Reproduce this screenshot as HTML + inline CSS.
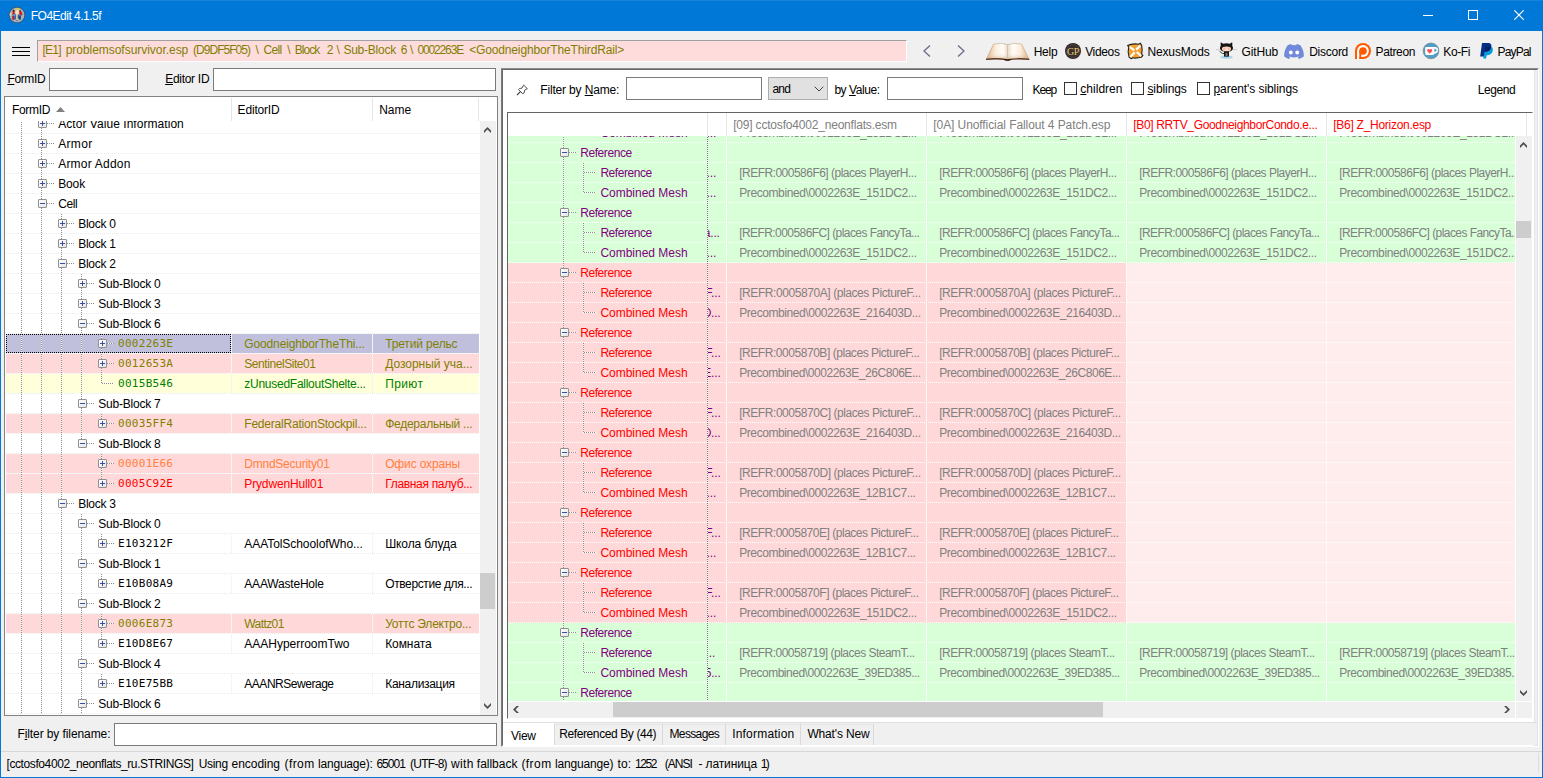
<!DOCTYPE html>
<html lang="en"><head><meta charset="utf-8"><title>FO4Edit 4.1.5f</title>
<style>
html,body{margin:0;padding:0}
body{width:1543px;height:778px;overflow:hidden;position:relative;background:#f0f0f0;font-family:"Liberation Sans",sans-serif;font-size:12px;color:#000}
div,span,svg{position:absolute;box-sizing:border-box}
.t{white-space:pre;line-height:14px;height:14px}
.m{font-family:"DejaVu Sans Mono","Liberation Mono",monospace}
u{text-decoration:underline;text-underline-offset:1px}
.inp{background:#fff;border:1px solid #7a7a7a}
.hd{background-image:repeating-linear-gradient(90deg,var(--c) 0 1px,transparent 1px 2px);height:1px}
.vd{background-image:repeating-linear-gradient(180deg,var(--c) 0 1px,transparent 1px 2px);width:1px}
.pm{width:9px;height:9px;border:1px solid #919191;border-radius:1px;background:linear-gradient(135deg,#fff,#e4e4e4)}
.pm:before{content:"";position:absolute;left:1px;top:3px;width:5px;height:1px;background:#3a4fa0}
.pm.p:after{content:"";position:absolute;left:3px;top:1px;width:1px;height:5px;background:#3a4fa0}

.tl{--c:#8c8c8c;background-color:#fff}

</style></head>
<body>
<div style="left:0px;top:0px;width:1543px;height:31px;background:#0078d7;"></div>
<div style="left:0px;top:0px;width:1543px;height:1px;background:#1883dc;"></div>
<div style="left:0px;top:31px;width:1px;height:747px;background:#0078d7;"></div>
<div style="left:1542px;top:31px;width:1px;height:747px;background:#0078d7;"></div>
<div style="left:0px;top:777px;width:1543px;height:1px;background:#0078d7;"></div>
<svg style="left:8px;top:6px" width="18" height="18" viewBox="-1 -1 18 18"><circle cx="8" cy="8" r="7.7" fill="#9fb1bb" stroke="#2c3844" stroke-width="0.9"/><circle cx="8" cy="8" r="7.1" fill="none" stroke="#c3ccd0" stroke-width="0.5"/><ellipse cx="1.7" cy="7.3" rx="1" ry="1.8" fill="#e8cfa8"/><path d="M3.5 4.4L5.6 3.6V12.3L3.6 12.8Z" fill="#e21616"/><path d="M10.2 4.2L11.6 3.6L13.7 7.3L12.4 8.6L10.3 7.2Z" fill="#e21616"/><path d="M3.6 3.6L4.9 2.6L5.4 4L4 4.6Z" fill="#151515"/><path d="M10.6 3L11.9 3.5L11.3 4.6L10.3 4.2Z" fill="#151515"/><rect x="3.2" y="7.6" width="8.6" height="4.8" fill="#3a68b0"/><path d="M3.2 7.6H6.2V9H3.2Z" fill="#6e98d4"/><path d="M9.6 9.5L11.8 8.8V12.4H9.6Z" fill="#27406e"/><rect x="3.6" y="9.2" width="1.6" height="3.4" fill="#e21616"/><ellipse cx="8.4" cy="2.6" rx="2.5" ry="1.5" fill="#d9c75c"/><ellipse cx="8.2" cy="5.2" rx="1.9" ry="2.3" fill="#f2dfcb"/><path d="M7.2 6.8H8.6V11.8H9.8V12.8H7.2Z" fill="#f3e59a"/><rect x="7.2" y="13.3" width="1.6" height="0.7" fill="#2b50a0"/></svg>
<span class="t" style="left:30.80px;top:9px;letter-spacing:-0.508px;color:#fff;">FO4Edit 4.1.5f</span>
<div style="left:1423px;top:15px;width:10px;height:1px;background:#fff;"></div>
<div style="left:1468px;top:10px;width:10px;height:10px;border:1px solid #fff;"></div>
<svg style="left:1514px;top:10px" width="10" height="10" viewBox="0 0 10 10"><path d="M0.3 0.3L9.7 9.7M9.7 0.3L0.3 9.7" stroke="#fff" stroke-width="1.15" fill="none"/></svg>
<div style="left:12px;top:47px;width:18px;height:1px;background:#000;"></div>
<div style="left:12px;top:51px;width:18px;height:1px;background:#000;"></div>
<div style="left:12px;top:55px;width:18px;height:1px;background:#000;"></div>
<div style="left:37px;top:40px;width:870px;height:22px;background:#ffdcdc;border-top:1px solid #a0a0a0;border-left:1px solid #a0a0a0;border-bottom:1px solid #fff;border-right:1px solid #fff;"></div>
<span class="t" style="left:42.60px;top:43px;letter-spacing:-0.815px;color:#808000;">[E1]</span>
<span class="t" style="left:65.70px;top:43px;letter-spacing:-0.038px;color:#808000;">problemsofsurvivor.esp</span>
<span class="t" style="left:193.10px;top:43px;letter-spacing:-0.976px;color:#808000;">(D9DF5F05)</span>
<span class="t" style="left:255.60px;top:43px;letter-spacing:0.456px;color:#808000;">\</span>
<span class="t" style="left:263.60px;top:43px;letter-spacing:-0.724px;color:#808000;">Cell</span>
<span class="t" style="left:287.20px;top:43px;letter-spacing:0.256px;color:#808000;">\</span>
<span class="t" style="left:294.80px;top:43px;letter-spacing:-0.969px;color:#808000;">Block</span>
<span class="t" style="left:326.70px;top:43px;letter-spacing:-1.972px;color:#808000;">2</span>
<span class="t" style="left:336.40px;top:43px;letter-spacing:0.256px;color:#808000;">\</span>
<span class="t" style="left:343.40px;top:43px;letter-spacing:-0.227px;color:#808000;">Sub-Block</span>
<span class="t" style="left:400.70px;top:43px;letter-spacing:-2.072px;color:#808000;">6</span>
<span class="t" style="left:409.90px;top:43px;letter-spacing:0.756px;color:#808000;">\</span>
<span class="t" style="left:417.40px;top:43px;letter-spacing:-1.131px;color:#808000;">0002263E</span>
<span class="t" style="left:469.20px;top:43px;letter-spacing:-0.147px;color:#808000;">&lt;GoodneighborTheThirdRail&gt;</span>
<svg style="left:921px;top:44px" width="12" height="14" viewBox="0 0 12 14"><path d="M9 1.5L3 7l6 5.5" stroke="#6b6b8a" stroke-width="1.3" fill="none"/></svg>
<svg style="left:955px;top:44px" width="12" height="14" viewBox="0 0 12 14"><path d="M3 1.5L9 7l-6 5.5" stroke="#6b6b8a" stroke-width="1.3" fill="none"/></svg>
<svg style="left:985px;top:42px" width="46" height="19" viewBox="985 42 46 19"><defs><linearGradient id="bl" x1="0" y1="0" x2="1" y2="0"><stop offset="0" stop-color="#dfb387"/><stop offset="0.45" stop-color="#fbeedd"/><stop offset="0.8" stop-color="#fffdf9"/><stop offset="1" stop-color="#ecdcc6"/></linearGradient><linearGradient id="br" x1="0" y1="0" x2="1" y2="0"><stop offset="0" stop-color="#eadbc6"/><stop offset="0.25" stop-color="#fffdf9"/><stop offset="0.6" stop-color="#fbeedd"/><stop offset="1" stop-color="#dcae80"/></linearGradient><linearGradient id="bs" x1="0" y1="0" x2="0" y2="1"><stop offset="0.55" stop-color="#fff" stop-opacity="0"/><stop offset="1" stop-color="#c88f5c" stop-opacity="0.55"/></linearGradient></defs><path d="M986.3 59.2L993.6 44.2Q1000.5 42.2 1007.5 44.6V59.6Q997 57.6 986.3 59.2Z" fill="url(#bl)"/><path d="M1029 59.2L1021.6 44.2Q1014.5 42.2 1007.5 44.6V59.6Q1018 57.6 1029 59.2Z" fill="url(#br)"/><path d="M986.3 59.2L993.6 44.2Q1000.5 42.2 1007.5 44.6Q1014.5 42.2 1021.6 44.2L1029 59.2Q1018 57.6 1007.5 59.6Q997 57.6 986.3 59.2Z" fill="url(#bs)"/><path d="M993.6 44.2Q1000.5 42.2 1007.5 44.6Q1014.5 42.2 1021.6 44.2" stroke="#b9a48c" stroke-width="0.6" fill="none"/><path d="M986.3 59.2L993.6 44.2M1029 59.2L1021.6 44.2" stroke="#c9a27c" stroke-width="0.7" fill="none"/><path d="M1007.5 45V59.4" stroke="#cdb9a0" stroke-width="0.8" fill="none"/><path d="M986 59.4Q997 57.9 1007.5 59.9Q1018 57.9 1029.3 59.4" stroke="#5a3420" stroke-width="1.3" fill="none"/><path d="M1004.5 59.4Q1007.5 61 1010.5 59.4" stroke="#2e1a10" stroke-width="1.2" fill="none"/></svg>
<svg style="left:1064px;top:42px" width="18" height="18" viewBox="1064 42 18 18"><circle cx="1073" cy="51" r="8" fill="#2a2226"/><circle cx="1073" cy="51" r="6.7" fill="#3a2e2c" stroke="#5a4a40" stroke-width="0.7"/><text x="1073" y="54.6" font-family="Liberation Serif,serif" font-size="10" fill="#e2c878" text-anchor="middle" letter-spacing="-0.4">GP</text></svg>
<svg style="left:1126px;top:42px" width="18" height="18" viewBox="1126 42 18 18"><path d="M1130 44.6Q1135 43.4 1138.6 44.3L1140.4 43.2L1141.6 45.2Q1142.6 50 1141.7 54.3L1142.9 55.4L1141.3 57.3Q1136 58.6 1132.6 57.8L1131.3 58.8L1129 57Q1127.6 51 1128.7 46.8L1127.6 45.6Z" fill="#f5a02c" stroke="#242424" stroke-width="1.1" stroke-linejoin="round"/><path d="M1129.8 46.8L1134.4 50.4M1140.3 45.6L1136.2 49.6M1141 56L1136.8 52M1130.2 57L1134.8 52.4" stroke="#fff" stroke-width="2.3" stroke-linecap="butt"/></svg>
<svg style="left:1215px;top:41px" width="24" height="19" viewBox="1215 41 24 19"><ellipse cx="1226.5" cy="57.2" rx="6.1" ry="1.6" fill="#9bdaf5" stroke="#e9c9bd" stroke-width="0.4"/><path d="M1216 49.6H1220.3M1233 49.6H1237" stroke="#b5b5b5" stroke-width="0.6"/><path d="M1224.3 53.6Q1222.3 53.8 1221.2 52.6Q1220.4 51.7 1219.6 51.5" stroke="#1a1a1a" stroke-width="0.9" fill="none"/><rect x="1224" y="51" width="5" height="5.6" fill="#151515"/><rect x="1225.5" y="53" width="2" height="3" fill="#7c7c7c"/><path d="M1220.9 42.2L1223.1 43.7Q1226.5 42.9 1229.9 43.7L1232.1 42.2Q1232.7 43.8 1232.2 45.6Q1233.4 47.6 1232.6 49.6Q1231.4 51.8 1226.5 51.8Q1221.6 51.8 1220.4 49.6Q1219.6 47.6 1220.8 45.6Q1220.3 43.8 1220.9 42.2Z" fill="#141414"/><ellipse cx="1226.5" cy="48.9" rx="4.6" ry="2.4" fill="#fbd6bd"/><ellipse cx="1224.2" cy="48.6" rx="0.9" ry="1.1" fill="#e9a9b2"/><ellipse cx="1228.9" cy="48.6" rx="0.9" ry="1.1" fill="#e9a9b2"/></svg>
<svg style="left:1283px;top:43px" width="22" height="17" viewBox="1283 43 22 17"><path d="M1287.6 45.2Q1289.4 44.3 1291.3 44L1291.9 45.2Q1294 44.9 1296.1 45.2L1296.7 44Q1298.6 44.3 1300.4 45.2Q1304.3 50.8 1303.8 56.6Q1301.4 58.4 1298.9 59L1297.8 57.3Q1298.9 56.9 1299.6 56.3Q1294 58.6 1288.4 56.3Q1289.1 56.9 1290.2 57.3L1289.1 59Q1286.6 58.4 1284.2 56.6Q1283.7 50.8 1287.6 45.2Z" fill="#7289da"/><circle cx="1290.8" cy="52.5" r="1.9" fill="#fff"/><circle cx="1297.2" cy="52.5" r="1.9" fill="#fff"/></svg>
<svg style="left:1354px;top:42px" width="18" height="18" viewBox="1354 42 18 18"><circle cx="1363" cy="51" r="8" fill="#ff5900"/><rect x="1355" y="51" width="8" height="8" fill="#ff5900"/><circle cx="1363" cy="51" r="5.9" fill="#fff"/><rect x="1357.1" y="51" width="2.3" height="8.2" fill="#fff"/><path d="M1357.1 51H1363V56.9H1357.1Z" fill="#fff"/><circle cx="1363" cy="51" r="3.8" fill="#ff5900"/><rect x="1359.3" y="51" width="2" height="8" fill="#ff5900"/></svg>
<svg style="left:1422px;top:42px" width="18" height="18" viewBox="1422 42 18 18"><circle cx="1431" cy="50.9" r="7.9" fill="#529fc6" stroke="#6a7378" stroke-width="0.5"/><path d="M1425.2 47.6Q1425.2 47 1425.8 47H1435Q1438 47.1 1438 50.2Q1438 53.3 1435 53.5H1434.6Q1434.4 54.9 1433 54.9H1426.6Q1425.2 54.9 1425.2 53.5Z" fill="#fff"/><path d="M1434.4 48.8H1435.2Q1436.4 48.9 1436.4 50.2Q1436.4 51.6 1435.2 51.7H1434.4Z" fill="#529fc6"/><path d="M1429.7 53.7L1427.5 51.4Q1426.6 50.1 1427.6 49.2Q1428.8 48.4 1429.7 49.6Q1430.6 48.4 1431.8 49.2Q1432.8 50.1 1431.9 51.4Z" fill="#ff4f4f"/></svg>
<svg style="left:1479px;top:42px" width="15" height="18" viewBox="1479 42 15 18"><path d="M1492 47Q1493.6 49 1492.6 51.4Q1491 55.2 1487 55.2H1486.6L1486.1 58.4H1483.2L1484.3 51.8H1486Q1490.5 51.8 1491.4 47Z" fill="#009cde"/><path d="M1482 43H1488.5Q1492 43.3 1491.3 47Q1490.5 51.8 1486 51.8H1484.6L1483.8 56.4H1480.2Z" fill="#003087"/><path d="M1485.4 46.6H1491.3Q1490.5 51.8 1486 51.8H1484.6Z" fill="#012169"/></svg>
<span class="t" style="left:1033.70px;top:45px;letter-spacing:-0.229px;">Help</span>
<span class="t" style="left:1085.20px;top:45px;letter-spacing:-0.354px;">Videos</span>
<span class="t" style="left:1147.40px;top:45px;letter-spacing:-0.132px;">NexusMods</span>
<span class="t" style="left:1241.40px;top:45px;letter-spacing:-0.089px;">GitHub</span>
<span class="t" style="left:1309.20px;top:45px;letter-spacing:-0.262px;">Discord</span>
<span class="t" style="left:1375.50px;top:45px;letter-spacing:-0.355px;">Patreon</span>
<span class="t" style="left:1443.30px;top:45px;letter-spacing:-0.368px;">Ko-Fi</span>
<span class="t" style="left:1497.60px;top:45px;letter-spacing:-0.843px;">PayPal</span>
<span class="t" style="left:7.40px;top:72px;letter-spacing:-0.360px;"><u>F</u>ormID</span>
<div class="inp" style="left:49px;top:68px;width:89px;height:23px"></div>
<span class="t" style="left:165.20px;top:72px;letter-spacing:-0.286px;"><u>E</u>ditor ID</span>
<div class="inp" style="left:213px;top:68px;width:283px;height:23px"></div>
<div style="left:4px;top:96px;width:494px;height:620px;background:#fff;border:1px solid #828282"></div>
<div style="left:5px;top:121px;width:475px;height:594px;overflow:hidden">
<div class="hd" style="--c:#ebebeb;left:1px;top:12px;width:473px"></div>
<div class="vd tl" style="left:16px;top:-7px;height:20px"></div>
<div class="vd tl" style="left:36px;top:-7px;height:20px"></div>
<div class="hd tl" style="left:42px;top:2px;width:7px"></div>
<div class="pm p" style="left:33px;top:-2px"></div>
<span class="t" style="left:53.20px;top:-4px;letter-spacing:0.050px;color:#000;">Actor Value Information</span>
<div class="hd" style="--c:#ebebeb;left:1px;top:32px;width:473px"></div>
<div class="vd tl" style="left:16px;top:13px;height:20px"></div>
<div class="vd tl" style="left:36px;top:13px;height:20px"></div>
<div class="hd tl" style="left:42px;top:22px;width:7px"></div>
<div class="pm p" style="left:33px;top:18px"></div>
<span class="t" style="left:53.20px;top:16px;letter-spacing:0.332px;color:#000;">Armor</span>
<div class="hd" style="--c:#ebebeb;left:1px;top:52px;width:473px"></div>
<div class="vd tl" style="left:16px;top:33px;height:20px"></div>
<div class="vd tl" style="left:36px;top:33px;height:20px"></div>
<div class="hd tl" style="left:42px;top:42px;width:7px"></div>
<div class="pm p" style="left:33px;top:38px"></div>
<span class="t" style="left:53.20px;top:36px;letter-spacing:0.217px;color:#000;">Armor Addon</span>
<div class="hd" style="--c:#ebebeb;left:1px;top:72px;width:473px"></div>
<div class="vd tl" style="left:16px;top:53px;height:20px"></div>
<div class="vd tl" style="left:36px;top:53px;height:20px"></div>
<div class="hd tl" style="left:42px;top:62px;width:7px"></div>
<div class="pm p" style="left:33px;top:58px"></div>
<span class="t" style="left:53.20px;top:56px;letter-spacing:-0.130px;color:#000;">Book</span>
<div class="hd" style="--c:#ebebeb;left:1px;top:92px;width:473px"></div>
<div class="vd tl" style="left:16px;top:73px;height:20px"></div>
<div class="vd tl" style="left:36px;top:73px;height:20px"></div>
<div class="hd tl" style="left:42px;top:82px;width:7px"></div>
<div class="pm " style="left:33px;top:78px"></div>
<span class="t" style="left:53.20px;top:76px;letter-spacing:-0.357px;color:#000;">Cell</span>
<div class="hd" style="--c:#ebebeb;left:1px;top:112px;width:473px"></div>
<div class="vd tl" style="left:16px;top:93px;height:20px"></div>
<div class="vd tl" style="left:36px;top:93px;height:20px"></div>
<div class="vd tl" style="left:56px;top:93px;height:20px"></div>
<div class="hd tl" style="left:62px;top:102px;width:7px"></div>
<div class="pm p" style="left:53px;top:98px"></div>
<span class="t" style="left:73.20px;top:96px;letter-spacing:-0.260px;color:#000;">Block 0</span>
<div class="hd" style="--c:#ebebeb;left:1px;top:132px;width:473px"></div>
<div class="vd tl" style="left:16px;top:113px;height:20px"></div>
<div class="vd tl" style="left:36px;top:113px;height:20px"></div>
<div class="vd tl" style="left:56px;top:113px;height:20px"></div>
<div class="hd tl" style="left:62px;top:122px;width:7px"></div>
<div class="pm p" style="left:53px;top:118px"></div>
<span class="t" style="left:73.20px;top:116px;letter-spacing:-0.260px;color:#000;">Block 1</span>
<div class="hd" style="--c:#ebebeb;left:1px;top:152px;width:473px"></div>
<div class="vd tl" style="left:16px;top:133px;height:20px"></div>
<div class="vd tl" style="left:36px;top:133px;height:20px"></div>
<div class="vd tl" style="left:56px;top:133px;height:20px"></div>
<div class="hd tl" style="left:62px;top:142px;width:7px"></div>
<div class="pm " style="left:53px;top:138px"></div>
<span class="t" style="left:73.20px;top:136px;letter-spacing:-0.260px;color:#000;">Block 2</span>
<div class="hd" style="--c:#ebebeb;left:1px;top:172px;width:473px"></div>
<div class="vd tl" style="left:16px;top:153px;height:20px"></div>
<div class="vd tl" style="left:36px;top:153px;height:20px"></div>
<div class="vd tl" style="left:56px;top:153px;height:20px"></div>
<div class="vd tl" style="left:76px;top:153px;height:20px"></div>
<div class="hd tl" style="left:82px;top:162px;width:7px"></div>
<div class="pm p" style="left:73px;top:158px"></div>
<span class="t" style="left:93.20px;top:156px;letter-spacing:-0.210px;color:#000;">Sub-Block 0</span>
<div class="hd" style="--c:#ebebeb;left:1px;top:192px;width:473px"></div>
<div class="vd tl" style="left:16px;top:173px;height:20px"></div>
<div class="vd tl" style="left:36px;top:173px;height:20px"></div>
<div class="vd tl" style="left:56px;top:173px;height:20px"></div>
<div class="vd tl" style="left:76px;top:173px;height:20px"></div>
<div class="hd tl" style="left:82px;top:182px;width:7px"></div>
<div class="pm p" style="left:73px;top:178px"></div>
<span class="t" style="left:93.20px;top:176px;letter-spacing:-0.210px;color:#000;">Sub-Block 3</span>
<div class="hd" style="--c:#ebebeb;left:1px;top:212px;width:473px"></div>
<div class="vd tl" style="left:16px;top:193px;height:20px"></div>
<div class="vd tl" style="left:36px;top:193px;height:20px"></div>
<div class="vd tl" style="left:56px;top:193px;height:20px"></div>
<div class="vd tl" style="left:76px;top:193px;height:20px"></div>
<div class="hd tl" style="left:82px;top:202px;width:7px"></div>
<div class="pm " style="left:73px;top:198px"></div>
<span class="t" style="left:93.20px;top:196px;letter-spacing:-0.210px;color:#000;">Sub-Block 6</span>
<div style="left:1px;top:213px;width:225px;height:19px;background:#c0c0dc;"></div>
<div style="left:227px;top:213px;width:140px;height:19px;background:#c0c0dc;"></div>
<div style="left:368px;top:213px;width:106px;height:19px;background:#c0c0dc;"></div>
<div class="hd" style="--c:#ebebeb;left:1px;top:232px;width:473px"></div>
<div class="vd" style="--c:#ebebeb;left:226px;top:213px;height:20px"></div>
<div class="vd" style="--c:#ebebeb;left:367px;top:213px;height:20px"></div>
<div class="vd tl" style="left:16px;top:213px;height:20px"></div>
<div class="vd tl" style="left:36px;top:213px;height:20px"></div>
<div class="vd tl" style="left:56px;top:213px;height:20px"></div>
<div class="vd tl" style="left:76px;top:213px;height:20px"></div>
<div class="vd tl" style="left:96px;top:213px;height:20px"></div>
<div class="hd tl" style="left:102px;top:222px;width:7px"></div>
<div class="pm p" style="left:93px;top:218px"></div>
<span class="t m" style="left:113.00px;top:216px;letter-spacing:0.288px;color:#808000;font-size:11px;">0002263E</span>
<span class="t" style="left:239.30px;top:216px;letter-spacing:-0.140px;color:#808000;">GoodneighborTheThi...</span>
<span class="t" style="left:380.20px;top:216px;letter-spacing:-0.150px;color:#808000;">Третий рельс</span>
<div style="left:1px;top:233px;width:225px;height:19px;background:#ffd9d9;"></div>
<div style="left:227px;top:233px;width:140px;height:19px;background:#ffd9d9;"></div>
<div style="left:368px;top:233px;width:106px;height:19px;background:#ffd9d9;"></div>
<div class="hd" style="--c:#ebebeb;left:1px;top:252px;width:473px"></div>
<div class="vd" style="--c:#ebebeb;left:226px;top:233px;height:20px"></div>
<div class="vd" style="--c:#ebebeb;left:367px;top:233px;height:20px"></div>
<div class="vd tl" style="left:16px;top:233px;height:20px"></div>
<div class="vd tl" style="left:36px;top:233px;height:20px"></div>
<div class="vd tl" style="left:56px;top:233px;height:20px"></div>
<div class="vd tl" style="left:76px;top:233px;height:20px"></div>
<div class="vd tl" style="left:96px;top:233px;height:20px"></div>
<div class="hd tl" style="left:102px;top:242px;width:7px"></div>
<div class="pm p" style="left:93px;top:238px"></div>
<span class="t m" style="left:113.00px;top:236px;letter-spacing:0.288px;color:#808000;font-size:11px;">0012653A</span>
<span class="t" style="left:239.30px;top:236px;letter-spacing:-0.438px;color:#808000;">SentinelSite01</span>
<span class="t" style="left:380.20px;top:236px;letter-spacing:-0.024px;color:#808000;">Дозорный уча...</span>
<div style="left:1px;top:253px;width:225px;height:19px;background:#ffffd9;"></div>
<div style="left:227px;top:253px;width:140px;height:19px;background:#ffffd9;"></div>
<div style="left:368px;top:253px;width:106px;height:19px;background:#ffffd9;"></div>
<div class="hd" style="--c:#ebebeb;left:1px;top:272px;width:473px"></div>
<div class="vd" style="--c:#ebebeb;left:226px;top:253px;height:20px"></div>
<div class="vd" style="--c:#ebebeb;left:367px;top:253px;height:20px"></div>
<div class="vd tl" style="left:16px;top:253px;height:20px"></div>
<div class="vd tl" style="left:36px;top:253px;height:20px"></div>
<div class="vd tl" style="left:56px;top:253px;height:20px"></div>
<div class="vd tl" style="left:76px;top:253px;height:20px"></div>
<div class="vd tl" style="left:96px;top:253px;height:10px"></div>
<div class="hd tl" style="left:97px;top:262px;width:12px"></div>
<span class="t m" style="left:113.00px;top:256px;letter-spacing:0.288px;color:#008000;font-size:11px;">0015B546</span>
<span class="t" style="left:239.30px;top:256px;letter-spacing:-0.264px;color:#008000;">zUnusedFalloutShelte...</span>
<span class="t" style="left:380.20px;top:256px;letter-spacing:0.391px;color:#008000;">Приют</span>
<div class="hd" style="--c:#ebebeb;left:1px;top:292px;width:473px"></div>
<div class="vd tl" style="left:16px;top:273px;height:20px"></div>
<div class="vd tl" style="left:36px;top:273px;height:20px"></div>
<div class="vd tl" style="left:56px;top:273px;height:20px"></div>
<div class="vd tl" style="left:76px;top:273px;height:20px"></div>
<div class="hd tl" style="left:82px;top:282px;width:7px"></div>
<div class="pm " style="left:73px;top:278px"></div>
<span class="t" style="left:93.20px;top:276px;letter-spacing:-0.210px;color:#000;">Sub-Block 7</span>
<div style="left:1px;top:293px;width:225px;height:19px;background:#ffd9d9;"></div>
<div style="left:227px;top:293px;width:140px;height:19px;background:#ffd9d9;"></div>
<div style="left:368px;top:293px;width:106px;height:19px;background:#ffd9d9;"></div>
<div class="hd" style="--c:#ebebeb;left:1px;top:312px;width:473px"></div>
<div class="vd" style="--c:#ebebeb;left:226px;top:293px;height:20px"></div>
<div class="vd" style="--c:#ebebeb;left:367px;top:293px;height:20px"></div>
<div class="vd tl" style="left:16px;top:293px;height:20px"></div>
<div class="vd tl" style="left:36px;top:293px;height:20px"></div>
<div class="vd tl" style="left:56px;top:293px;height:20px"></div>
<div class="vd tl" style="left:76px;top:293px;height:20px"></div>
<div class="vd tl" style="left:96px;top:293px;height:10px"></div>
<div class="hd tl" style="left:102px;top:302px;width:7px"></div>
<div class="pm p" style="left:93px;top:298px"></div>
<span class="t m" style="left:113.00px;top:296px;letter-spacing:0.288px;color:#808000;font-size:11px;">00035FF4</span>
<span class="t" style="left:239.30px;top:296px;letter-spacing:-0.213px;color:#808000;">FederalRationStockpil...</span>
<span class="t" style="left:380.20px;top:296px;letter-spacing:-0.265px;color:#808000;">Федеральный ...</span>
<div class="hd" style="--c:#ebebeb;left:1px;top:332px;width:473px"></div>
<div class="vd tl" style="left:16px;top:313px;height:20px"></div>
<div class="vd tl" style="left:36px;top:313px;height:20px"></div>
<div class="vd tl" style="left:56px;top:313px;height:20px"></div>
<div class="vd tl" style="left:76px;top:313px;height:10px"></div>
<div class="hd tl" style="left:82px;top:322px;width:7px"></div>
<div class="pm " style="left:73px;top:318px"></div>
<span class="t" style="left:93.20px;top:316px;letter-spacing:-0.210px;color:#000;">Sub-Block 8</span>
<div style="left:1px;top:333px;width:225px;height:19px;background:#ffd9d9;"></div>
<div style="left:227px;top:333px;width:140px;height:19px;background:#ffd9d9;"></div>
<div style="left:368px;top:333px;width:106px;height:19px;background:#ffd9d9;"></div>
<div class="hd" style="--c:#ebebeb;left:1px;top:352px;width:473px"></div>
<div class="vd" style="--c:#ebebeb;left:226px;top:333px;height:20px"></div>
<div class="vd" style="--c:#ebebeb;left:367px;top:333px;height:20px"></div>
<div class="vd tl" style="left:16px;top:333px;height:20px"></div>
<div class="vd tl" style="left:36px;top:333px;height:20px"></div>
<div class="vd tl" style="left:56px;top:333px;height:20px"></div>
<div class="vd tl" style="left:96px;top:333px;height:20px"></div>
<div class="hd tl" style="left:102px;top:342px;width:7px"></div>
<div class="pm p" style="left:93px;top:338px"></div>
<span class="t m" style="left:113.00px;top:336px;letter-spacing:0.288px;color:#ff8040;font-size:11px;">00001E66</span>
<span class="t" style="left:239.30px;top:336px;letter-spacing:-0.246px;color:#ff8040;">DmndSecurity01</span>
<span class="t" style="left:380.20px;top:336px;letter-spacing:-0.149px;color:#ff8040;">Офис охраны</span>
<div style="left:1px;top:353px;width:225px;height:19px;background:#ffd9d9;"></div>
<div style="left:227px;top:353px;width:140px;height:19px;background:#ffd9d9;"></div>
<div style="left:368px;top:353px;width:106px;height:19px;background:#ffd9d9;"></div>
<div class="hd" style="--c:#ebebeb;left:1px;top:372px;width:473px"></div>
<div class="vd" style="--c:#ebebeb;left:226px;top:353px;height:20px"></div>
<div class="vd" style="--c:#ebebeb;left:367px;top:353px;height:20px"></div>
<div class="vd tl" style="left:16px;top:353px;height:20px"></div>
<div class="vd tl" style="left:36px;top:353px;height:20px"></div>
<div class="vd tl" style="left:56px;top:353px;height:20px"></div>
<div class="vd tl" style="left:96px;top:353px;height:10px"></div>
<div class="hd tl" style="left:102px;top:362px;width:7px"></div>
<div class="pm p" style="left:93px;top:358px"></div>
<span class="t m" style="left:113.00px;top:356px;letter-spacing:0.288px;color:#ff0000;font-size:11px;">0005C92E</span>
<span class="t" style="left:239.30px;top:356px;letter-spacing:-0.142px;color:#ff0000;">PrydwenHull01</span>
<span class="t" style="left:380.20px;top:356px;letter-spacing:-0.319px;color:#ff0000;">Главная палуб...</span>
<div class="hd" style="--c:#ebebeb;left:1px;top:392px;width:473px"></div>
<div class="vd tl" style="left:16px;top:373px;height:20px"></div>
<div class="vd tl" style="left:36px;top:373px;height:20px"></div>
<div class="vd tl" style="left:56px;top:373px;height:20px"></div>
<div class="hd tl" style="left:62px;top:382px;width:7px"></div>
<div class="pm " style="left:53px;top:378px"></div>
<span class="t" style="left:73.20px;top:376px;letter-spacing:-0.260px;color:#000;">Block 3</span>
<div class="hd" style="--c:#ebebeb;left:1px;top:412px;width:473px"></div>
<div class="vd tl" style="left:16px;top:393px;height:20px"></div>
<div class="vd tl" style="left:36px;top:393px;height:20px"></div>
<div class="vd tl" style="left:56px;top:393px;height:20px"></div>
<div class="vd tl" style="left:76px;top:393px;height:20px"></div>
<div class="hd tl" style="left:82px;top:402px;width:7px"></div>
<div class="pm " style="left:73px;top:398px"></div>
<span class="t" style="left:93.20px;top:396px;letter-spacing:-0.210px;color:#000;">Sub-Block 0</span>
<div class="hd" style="--c:#ebebeb;left:1px;top:432px;width:473px"></div>
<div class="vd" style="--c:#ebebeb;left:226px;top:413px;height:20px"></div>
<div class="vd" style="--c:#ebebeb;left:367px;top:413px;height:20px"></div>
<div class="vd tl" style="left:16px;top:413px;height:20px"></div>
<div class="vd tl" style="left:36px;top:413px;height:20px"></div>
<div class="vd tl" style="left:56px;top:413px;height:20px"></div>
<div class="vd tl" style="left:76px;top:413px;height:20px"></div>
<div class="vd tl" style="left:96px;top:413px;height:10px"></div>
<div class="hd tl" style="left:102px;top:422px;width:7px"></div>
<div class="pm p" style="left:93px;top:418px"></div>
<span class="t m" style="left:113.00px;top:416px;letter-spacing:0.288px;color:#000;font-size:11px;">E103212F</span>
<span class="t" style="left:239.30px;top:416px;letter-spacing:-0.065px;color:#000;">AAATolSchoolofWho...</span>
<span class="t" style="left:380.20px;top:416px;letter-spacing:-0.104px;color:#000;">Школа блуда</span>
<div class="hd" style="--c:#ebebeb;left:1px;top:452px;width:473px"></div>
<div class="vd tl" style="left:16px;top:433px;height:20px"></div>
<div class="vd tl" style="left:36px;top:433px;height:20px"></div>
<div class="vd tl" style="left:56px;top:433px;height:20px"></div>
<div class="vd tl" style="left:76px;top:433px;height:20px"></div>
<div class="hd tl" style="left:82px;top:442px;width:7px"></div>
<div class="pm " style="left:73px;top:438px"></div>
<span class="t" style="left:93.20px;top:436px;letter-spacing:-0.210px;color:#000;">Sub-Block 1</span>
<div class="hd" style="--c:#ebebeb;left:1px;top:472px;width:473px"></div>
<div class="vd" style="--c:#ebebeb;left:226px;top:453px;height:20px"></div>
<div class="vd" style="--c:#ebebeb;left:367px;top:453px;height:20px"></div>
<div class="vd tl" style="left:16px;top:453px;height:20px"></div>
<div class="vd tl" style="left:36px;top:453px;height:20px"></div>
<div class="vd tl" style="left:56px;top:453px;height:20px"></div>
<div class="vd tl" style="left:76px;top:453px;height:20px"></div>
<div class="vd tl" style="left:96px;top:453px;height:10px"></div>
<div class="hd tl" style="left:102px;top:462px;width:7px"></div>
<div class="pm p" style="left:93px;top:458px"></div>
<span class="t m" style="left:113.00px;top:456px;letter-spacing:0.288px;color:#000;font-size:11px;">E10B08A9</span>
<span class="t" style="left:239.30px;top:456px;letter-spacing:-0.192px;color:#000;">AAAWasteHole</span>
<span class="t" style="left:380.20px;top:456px;letter-spacing:-0.382px;color:#000;">Отверстие для...</span>
<div class="hd" style="--c:#ebebeb;left:1px;top:492px;width:473px"></div>
<div class="vd tl" style="left:16px;top:473px;height:20px"></div>
<div class="vd tl" style="left:36px;top:473px;height:20px"></div>
<div class="vd tl" style="left:56px;top:473px;height:20px"></div>
<div class="vd tl" style="left:76px;top:473px;height:20px"></div>
<div class="hd tl" style="left:82px;top:482px;width:7px"></div>
<div class="pm " style="left:73px;top:478px"></div>
<span class="t" style="left:93.20px;top:476px;letter-spacing:-0.210px;color:#000;">Sub-Block 2</span>
<div style="left:1px;top:493px;width:225px;height:19px;background:#ffd9d9;"></div>
<div style="left:227px;top:493px;width:140px;height:19px;background:#ffd9d9;"></div>
<div style="left:368px;top:493px;width:106px;height:19px;background:#ffd9d9;"></div>
<div class="hd" style="--c:#ebebeb;left:1px;top:512px;width:473px"></div>
<div class="vd" style="--c:#ebebeb;left:226px;top:493px;height:20px"></div>
<div class="vd" style="--c:#ebebeb;left:367px;top:493px;height:20px"></div>
<div class="vd tl" style="left:16px;top:493px;height:20px"></div>
<div class="vd tl" style="left:36px;top:493px;height:20px"></div>
<div class="vd tl" style="left:56px;top:493px;height:20px"></div>
<div class="vd tl" style="left:76px;top:493px;height:20px"></div>
<div class="vd tl" style="left:96px;top:493px;height:20px"></div>
<div class="hd tl" style="left:102px;top:502px;width:7px"></div>
<div class="pm p" style="left:93px;top:498px"></div>
<span class="t m" style="left:113.00px;top:496px;letter-spacing:0.288px;color:#808000;font-size:11px;">0006E873</span>
<span class="t" style="left:239.30px;top:496px;letter-spacing:-0.580px;color:#808000;">Wattz01</span>
<span class="t" style="left:380.20px;top:496px;letter-spacing:-0.211px;color:#808000;">Уоттс Электро...</span>
<div class="hd" style="--c:#ebebeb;left:1px;top:532px;width:473px"></div>
<div class="vd" style="--c:#ebebeb;left:226px;top:513px;height:20px"></div>
<div class="vd" style="--c:#ebebeb;left:367px;top:513px;height:20px"></div>
<div class="vd tl" style="left:16px;top:513px;height:20px"></div>
<div class="vd tl" style="left:36px;top:513px;height:20px"></div>
<div class="vd tl" style="left:56px;top:513px;height:20px"></div>
<div class="vd tl" style="left:76px;top:513px;height:20px"></div>
<div class="vd tl" style="left:96px;top:513px;height:10px"></div>
<div class="hd tl" style="left:102px;top:522px;width:7px"></div>
<div class="pm p" style="left:93px;top:518px"></div>
<span class="t m" style="left:113.00px;top:516px;letter-spacing:0.288px;color:#000;font-size:11px;">E10D8E67</span>
<span class="t" style="left:239.30px;top:516px;letter-spacing:-0.012px;color:#000;">AAAHyperroomTwo</span>
<span class="t" style="left:380.20px;top:516px;letter-spacing:-0.083px;color:#000;">Комната</span>
<div class="hd" style="--c:#ebebeb;left:1px;top:552px;width:473px"></div>
<div class="vd tl" style="left:16px;top:533px;height:20px"></div>
<div class="vd tl" style="left:36px;top:533px;height:20px"></div>
<div class="vd tl" style="left:56px;top:533px;height:20px"></div>
<div class="vd tl" style="left:76px;top:533px;height:20px"></div>
<div class="hd tl" style="left:82px;top:542px;width:7px"></div>
<div class="pm " style="left:73px;top:538px"></div>
<span class="t" style="left:93.20px;top:536px;letter-spacing:-0.210px;color:#000;">Sub-Block 4</span>
<div class="hd" style="--c:#ebebeb;left:1px;top:572px;width:473px"></div>
<div class="vd" style="--c:#ebebeb;left:226px;top:553px;height:20px"></div>
<div class="vd" style="--c:#ebebeb;left:367px;top:553px;height:20px"></div>
<div class="vd tl" style="left:16px;top:553px;height:20px"></div>
<div class="vd tl" style="left:36px;top:553px;height:20px"></div>
<div class="vd tl" style="left:56px;top:553px;height:20px"></div>
<div class="vd tl" style="left:76px;top:553px;height:20px"></div>
<div class="vd tl" style="left:96px;top:553px;height:10px"></div>
<div class="hd tl" style="left:102px;top:562px;width:7px"></div>
<div class="pm p" style="left:93px;top:558px"></div>
<span class="t m" style="left:113.00px;top:556px;letter-spacing:0.288px;color:#000;font-size:11px;">E10E75BB</span>
<span class="t" style="left:239.30px;top:556px;letter-spacing:-0.473px;color:#000;">AAANRSewerage</span>
<span class="t" style="left:380.20px;top:556px;letter-spacing:-0.302px;color:#000;">Канализация</span>
<div class="hd" style="--c:#ebebeb;left:1px;top:592px;width:473px"></div>
<div class="vd tl" style="left:16px;top:573px;height:20px"></div>
<div class="vd tl" style="left:36px;top:573px;height:20px"></div>
<div class="vd tl" style="left:56px;top:573px;height:20px"></div>
<div class="vd tl" style="left:76px;top:573px;height:20px"></div>
<div class="hd tl" style="left:82px;top:582px;width:7px"></div>
<div class="pm " style="left:73px;top:578px"></div>
<span class="t" style="left:93.20px;top:576px;letter-spacing:-0.210px;color:#000;">Sub-Block 6</span>
<div style="left:1px;top:213px;width:225px;height:19px;border:1px dotted #000"></div>
</div>
<div style="left:5px;top:97px;width:492px;height:24px;background:#fff;"></div>
<span class="t" style="left:11.90px;top:103px;letter-spacing:-0.300px;">FormID</span>
<svg style="left:56px;top:107px" width="9" height="5" viewBox="0 0 9 5"><path d="M0 5L4.5 0L9 5Z" fill="#808080"/></svg>
<span class="t" style="left:237.60px;top:103px;letter-spacing:-0.178px;">EditorID</span>
<span class="t" style="left:379.20px;top:103px;letter-spacing:-0.005px;">Name</span>
<div style="left:231px;top:98px;width:1px;height:23px;background:#e5e5e5;"></div>
<div style="left:372px;top:98px;width:1px;height:23px;background:#e5e5e5;"></div>
<div style="left:478px;top:98px;width:1px;height:23px;background:#e5e5e5;"></div>
<div style="left:480px;top:121px;width:16px;height:594px;background:#f0f0f0;"></div>
<svg style="left:484px;top:127px" width="7" height="6" viewBox="0 0 7 6"><polygon points="0,3.5 3.5,0 7,3.5 7,6 3.5,2.5 0,6" fill="#505050"/></svg>
<svg style="left:484px;top:703px" width="7" height="6" viewBox="0 0 7 6"><polygon points="0,2.5 3.5,6 7,2.5 7,0 3.5,3.5 0,0" fill="#505050"/></svg>
<div style="left:480px;top:573px;width:15px;height:36px;background:#cdcdcd;"></div>
<span class="t" style="left:17.40px;top:727px;letter-spacing:-0.089px;">F<u>i</u>lter by filename:</span>
<div class="inp" style="left:114px;top:723px;width:383px;height:23px"></div>
<div style="left:501px;top:68px;width:1038px;height:679px;background:#f0f0f0;border-top:1px solid #8c8c8c;border-left:1px solid #7a7a7a;border-right:1px solid #fff;border-bottom:1px solid #fff"></div>
<div style="left:502px;top:69px;width:1036px;height:677px;border-top:1px solid #696969;border-left:1px solid #696969;border-right:1px solid #e3e3e3;border-bottom:1px solid #e3e3e3"></div>
<div style="left:503px;top:70px;width:1031px;height:676px;background:#fff;"></div>
<div style="left:1534px;top:70px;width:1px;height:676px;background:#e6e6e6;"></div>
<svg style="left:515px;top:83px" width="14" height="14" viewBox="515 83 14 14"><path d="M520.5 91.7L517 95" stroke="#3c3c3c" stroke-width="1.1" fill="none"/><path d="M523.6 85.1L527.4 88.7L524.7 90.1L524.1 92.9L522.7 93.7L518.5 89.6L519.5 88.5L522 88.1Z" fill="#fff" stroke="#3c3c3c" stroke-width="0.9" stroke-linejoin="round"/></svg>
<span class="t" style="left:540.30px;top:83px;letter-spacing:-0.169px;">Filter by <u>N</u>ame:</span>
<div class="inp" style="left:626px;top:77px;width:136px;height:23px"></div>
<div style="left:768px;top:77px;width:60px;height:23px;background:#e1e1e1;border:1px solid #adadad"></div>
<span class="t" style="left:772.40px;top:82px;letter-spacing:-0.708px;">and</span>
<svg style="left:814px;top:86px" width="10" height="6" viewBox="0 0 10 6"><path d="M0.7 0.7L5 5L9.3 0.7" stroke="#444" stroke-width="1" fill="none"/></svg>
<span class="t" style="left:834.40px;top:83px;letter-spacing:-0.443px;">by <u>V</u>alue:</span>
<div class="inp" style="left:887px;top:77px;width:136px;height:23px"></div>
<span class="t" style="left:1032.60px;top:83px;letter-spacing:-1.110px;">Keep</span>
<div style="left:1064px;top:82px;width:13px;height:13px;background:#fff;border:1px solid #333"></div>
<div style="left:1131px;top:82px;width:13px;height:13px;background:#fff;border:1px solid #333"></div>
<div style="left:1197px;top:82px;width:13px;height:13px;background:#fff;border:1px solid #333"></div>
<span class="t" style="left:1080.30px;top:82px;letter-spacing:0.024px;"><u>c</u>hildren</span>
<span class="t" style="left:1147.40px;top:82px;letter-spacing:-0.088px;"><u>s</u>iblings</span>
<span class="t" style="left:1213.50px;top:82px;letter-spacing:-0.073px;"><u>p</u>arent&#x27;s siblings</span>
<span class="t" style="left:1477.70px;top:83px;letter-spacing:-0.429px;">Legend</span>
<div style="left:507px;top:112px;width:1026px;height:607px;border:1px solid #646464;border-right-color:#fff;border-bottom-color:#fff"></div>
<div style="left:508px;top:136px;width:1007px;height:565px;overflow:hidden;background:#fff">
<div style="left:0px;top:-13px;width:199px;height:19px;background:#d9ffd9;"></div>
<div style="left:200px;top:-13px;width:18px;height:19px;background:#d9ffd9;"></div>
<div style="left:219px;top:-13px;width:199px;height:19px;background:#d9ffd9;"></div>
<div style="left:419px;top:-13px;width:199px;height:19px;background:#d9ffd9;"></div>
<div style="left:619px;top:-13px;width:199px;height:19px;background:#d9ffd9;"></div>
<div style="left:819px;top:-13px;width:189px;height:19px;background:#d9ffd9;"></div>
<div class="hd" style="--c:#fff;left:0;top:6px;width:1007px;background-color:#d9ffd9"></div>
<div class="vd" style="--c:#7c7c7c;left:199px;top:-13px;height:20px;background-color:#fff"></div>
<div class="vd" style="--c:#fff;left:218px;top:-13px;height:20px;background-color:#ecffec"></div>
<div class="vd" style="--c:#fff;left:418px;top:-13px;height:20px;background-color:#ecffec"></div>
<div class="vd" style="--c:#fff;left:618px;top:-13px;height:20px;background-color:#ecffec"></div>
<div class="vd" style="--c:#fff;left:818px;top:-13px;height:20px;background-color:#ecffec"></div>
<div class="vd tl" style="left:55px;top:-13px;height:20px"></div>
<div class="vd tl" style="left:75px;top:-13px;height:10px"></div>
<div class="hd tl" style="left:76px;top:-4px;width:12px"></div>
<span class="t" style="left:92.40px;top:-10px;letter-spacing:-0.015px;color:#800080;">Combined Mesh</span>
<div style="left:200px;top:-13px;width:18px;height:19px;overflow:hidden">
<span class="t" style="left:-1.40px;top:3px;letter-spacing:-0.2px;color:#800080">...</span>
</div>
<span class="t" style="left:231.20px;top:-10px;letter-spacing:-0.402px;color:#808080;">Precombined\0002263E_151DC2...</span>
<span class="t" style="left:431.20px;top:-10px;letter-spacing:-0.402px;color:#808080;">Precombined\0002263E_151DC2...</span>
<span class="t" style="left:631.20px;top:-10px;letter-spacing:-0.402px;color:#808080;">Precombined\0002263E_151DC2...</span>
<div style="left:819px;top:-13px;width:188px;height:19px;overflow:hidden">
<span class="t" style="left:12.20px;top:3px;letter-spacing:-0.402px;color:#808080;">Precombined\0002263E_151DC2...</span>
</div>
<div style="left:0px;top:7px;width:199px;height:19px;background:#d9ffd9;"></div>
<div style="left:200px;top:7px;width:18px;height:19px;background:#d9ffd9;"></div>
<div style="left:219px;top:7px;width:199px;height:19px;background:#d9ffd9;"></div>
<div style="left:419px;top:7px;width:199px;height:19px;background:#d9ffd9;"></div>
<div style="left:619px;top:7px;width:199px;height:19px;background:#d9ffd9;"></div>
<div style="left:819px;top:7px;width:189px;height:19px;background:#d9ffd9;"></div>
<div class="hd" style="--c:#fff;left:0;top:26px;width:1007px;background-color:#d9ffd9"></div>
<div class="vd" style="--c:#7c7c7c;left:199px;top:7px;height:20px;background-color:#fff"></div>
<div class="vd" style="--c:#fff;left:218px;top:7px;height:20px;background-color:#ecffec"></div>
<div class="vd" style="--c:#fff;left:418px;top:7px;height:20px;background-color:#ecffec"></div>
<div class="vd" style="--c:#fff;left:618px;top:7px;height:20px;background-color:#ecffec"></div>
<div class="vd" style="--c:#fff;left:818px;top:7px;height:20px;background-color:#ecffec"></div>
<div class="vd tl" style="left:55px;top:7px;height:20px"></div>
<div class="hd tl" style="left:61px;top:16px;width:7px"></div>
<div class="pm" style="left:52px;top:12px"></div>
<span class="t" style="left:72.20px;top:10px;letter-spacing:-0.420px;color:#800080;">Reference</span>
<div style="left:0px;top:27px;width:199px;height:19px;background:#d9ffd9;"></div>
<div style="left:200px;top:27px;width:18px;height:19px;background:#d9ffd9;"></div>
<div style="left:219px;top:27px;width:199px;height:19px;background:#d9ffd9;"></div>
<div style="left:419px;top:27px;width:199px;height:19px;background:#d9ffd9;"></div>
<div style="left:619px;top:27px;width:199px;height:19px;background:#d9ffd9;"></div>
<div style="left:819px;top:27px;width:189px;height:19px;background:#d9ffd9;"></div>
<div class="hd" style="--c:#fff;left:0;top:46px;width:1007px;background-color:#d9ffd9"></div>
<div class="vd" style="--c:#7c7c7c;left:199px;top:27px;height:20px;background-color:#fff"></div>
<div class="vd" style="--c:#fff;left:218px;top:27px;height:20px;background-color:#ecffec"></div>
<div class="vd" style="--c:#fff;left:418px;top:27px;height:20px;background-color:#ecffec"></div>
<div class="vd" style="--c:#fff;left:618px;top:27px;height:20px;background-color:#ecffec"></div>
<div class="vd" style="--c:#fff;left:818px;top:27px;height:20px;background-color:#ecffec"></div>
<div class="vd tl" style="left:55px;top:27px;height:20px"></div>
<div class="vd tl" style="left:75px;top:27px;height:20px"></div>
<div class="hd tl" style="left:76px;top:36px;width:12px"></div>
<span class="t" style="left:92.40px;top:30px;letter-spacing:-0.445px;color:#800080;">Reference</span>
<div style="left:200px;top:27px;width:18px;height:19px;overflow:hidden">
<span class="t" style="left:-1.40px;top:3px;letter-spacing:-0.2px;color:#800080">...</span>
</div>
<span class="t" style="left:231.20px;top:30px;letter-spacing:-0.514px;color:#808080;">[REFR:000586F6] (places PlayerH...</span>
<span class="t" style="left:431.20px;top:30px;letter-spacing:-0.514px;color:#808080;">[REFR:000586F6] (places PlayerH...</span>
<span class="t" style="left:631.20px;top:30px;letter-spacing:-0.514px;color:#808080;">[REFR:000586F6] (places PlayerH...</span>
<div style="left:819px;top:27px;width:188px;height:19px;overflow:hidden">
<span class="t" style="left:12.20px;top:3px;letter-spacing:-0.514px;color:#808080;">[REFR:000586F6] (places PlayerH...</span>
</div>
<div style="left:0px;top:47px;width:199px;height:19px;background:#d9ffd9;"></div>
<div style="left:200px;top:47px;width:18px;height:19px;background:#d9ffd9;"></div>
<div style="left:219px;top:47px;width:199px;height:19px;background:#d9ffd9;"></div>
<div style="left:419px;top:47px;width:199px;height:19px;background:#d9ffd9;"></div>
<div style="left:619px;top:47px;width:199px;height:19px;background:#d9ffd9;"></div>
<div style="left:819px;top:47px;width:189px;height:19px;background:#d9ffd9;"></div>
<div class="hd" style="--c:#fff;left:0;top:66px;width:1007px;background-color:#d9ffd9"></div>
<div class="vd" style="--c:#7c7c7c;left:199px;top:47px;height:20px;background-color:#fff"></div>
<div class="vd" style="--c:#fff;left:218px;top:47px;height:20px;background-color:#ecffec"></div>
<div class="vd" style="--c:#fff;left:418px;top:47px;height:20px;background-color:#ecffec"></div>
<div class="vd" style="--c:#fff;left:618px;top:47px;height:20px;background-color:#ecffec"></div>
<div class="vd" style="--c:#fff;left:818px;top:47px;height:20px;background-color:#ecffec"></div>
<div class="vd tl" style="left:55px;top:47px;height:20px"></div>
<div class="vd tl" style="left:75px;top:47px;height:10px"></div>
<div class="hd tl" style="left:76px;top:56px;width:12px"></div>
<span class="t" style="left:92.40px;top:50px;letter-spacing:-0.015px;color:#800080;">Combined Mesh</span>
<div style="left:200px;top:47px;width:18px;height:19px;overflow:hidden">
<span class="t" style="left:-1.40px;top:3px;letter-spacing:-0.2px;color:#800080">...</span>
</div>
<span class="t" style="left:231.20px;top:50px;letter-spacing:-0.402px;color:#808080;">Precombined\0002263E_151DC2...</span>
<span class="t" style="left:431.20px;top:50px;letter-spacing:-0.402px;color:#808080;">Precombined\0002263E_151DC2...</span>
<span class="t" style="left:631.20px;top:50px;letter-spacing:-0.402px;color:#808080;">Precombined\0002263E_151DC2...</span>
<div style="left:819px;top:47px;width:188px;height:19px;overflow:hidden">
<span class="t" style="left:12.20px;top:3px;letter-spacing:-0.402px;color:#808080;">Precombined\0002263E_151DC2...</span>
</div>
<div style="left:0px;top:67px;width:199px;height:19px;background:#d9ffd9;"></div>
<div style="left:200px;top:67px;width:18px;height:19px;background:#d9ffd9;"></div>
<div style="left:219px;top:67px;width:199px;height:19px;background:#d9ffd9;"></div>
<div style="left:419px;top:67px;width:199px;height:19px;background:#d9ffd9;"></div>
<div style="left:619px;top:67px;width:199px;height:19px;background:#d9ffd9;"></div>
<div style="left:819px;top:67px;width:189px;height:19px;background:#d9ffd9;"></div>
<div class="hd" style="--c:#fff;left:0;top:86px;width:1007px;background-color:#d9ffd9"></div>
<div class="vd" style="--c:#7c7c7c;left:199px;top:67px;height:20px;background-color:#fff"></div>
<div class="vd" style="--c:#fff;left:218px;top:67px;height:20px;background-color:#ecffec"></div>
<div class="vd" style="--c:#fff;left:418px;top:67px;height:20px;background-color:#ecffec"></div>
<div class="vd" style="--c:#fff;left:618px;top:67px;height:20px;background-color:#ecffec"></div>
<div class="vd" style="--c:#fff;left:818px;top:67px;height:20px;background-color:#ecffec"></div>
<div class="vd tl" style="left:55px;top:67px;height:20px"></div>
<div class="hd tl" style="left:61px;top:76px;width:7px"></div>
<div class="pm" style="left:52px;top:72px"></div>
<span class="t" style="left:72.20px;top:70px;letter-spacing:-0.420px;color:#800080;">Reference</span>
<div style="left:0px;top:87px;width:199px;height:19px;background:#d9ffd9;"></div>
<div style="left:200px;top:87px;width:18px;height:19px;background:#d9ffd9;"></div>
<div style="left:219px;top:87px;width:199px;height:19px;background:#d9ffd9;"></div>
<div style="left:419px;top:87px;width:199px;height:19px;background:#d9ffd9;"></div>
<div style="left:619px;top:87px;width:199px;height:19px;background:#d9ffd9;"></div>
<div style="left:819px;top:87px;width:189px;height:19px;background:#d9ffd9;"></div>
<div class="hd" style="--c:#fff;left:0;top:106px;width:1007px;background-color:#d9ffd9"></div>
<div class="vd" style="--c:#7c7c7c;left:199px;top:87px;height:20px;background-color:#fff"></div>
<div class="vd" style="--c:#fff;left:218px;top:87px;height:20px;background-color:#ecffec"></div>
<div class="vd" style="--c:#fff;left:418px;top:87px;height:20px;background-color:#ecffec"></div>
<div class="vd" style="--c:#fff;left:618px;top:87px;height:20px;background-color:#ecffec"></div>
<div class="vd" style="--c:#fff;left:818px;top:87px;height:20px;background-color:#ecffec"></div>
<div class="vd tl" style="left:55px;top:87px;height:20px"></div>
<div class="vd tl" style="left:75px;top:87px;height:20px"></div>
<div class="hd tl" style="left:76px;top:96px;width:12px"></div>
<span class="t" style="left:92.40px;top:90px;letter-spacing:-0.445px;color:#800080;">Reference</span>
<div style="left:200px;top:87px;width:18px;height:19px;overflow:hidden">
<span class="t" style="left:-4.17px;top:3px;letter-spacing:-0.2px;color:#800080">a...</span>
</div>
<span class="t" style="left:231.20px;top:90px;letter-spacing:-0.567px;color:#808080;">[REFR:000586FC] (places FancyTa...</span>
<span class="t" style="left:431.20px;top:90px;letter-spacing:-0.567px;color:#808080;">[REFR:000586FC] (places FancyTa...</span>
<span class="t" style="left:631.20px;top:90px;letter-spacing:-0.567px;color:#808080;">[REFR:000586FC] (places FancyTa...</span>
<div style="left:819px;top:87px;width:188px;height:19px;overflow:hidden">
<span class="t" style="left:12.20px;top:3px;letter-spacing:-0.567px;color:#808080;">[REFR:000586FC] (places FancyTa...</span>
</div>
<div style="left:0px;top:107px;width:199px;height:19px;background:#d9ffd9;"></div>
<div style="left:200px;top:107px;width:18px;height:19px;background:#d9ffd9;"></div>
<div style="left:219px;top:107px;width:199px;height:19px;background:#d9ffd9;"></div>
<div style="left:419px;top:107px;width:199px;height:19px;background:#d9ffd9;"></div>
<div style="left:619px;top:107px;width:199px;height:19px;background:#d9ffd9;"></div>
<div style="left:819px;top:107px;width:189px;height:19px;background:#d9ffd9;"></div>
<div class="hd" style="--c:#fff;left:0;top:126px;width:1007px;background-color:#d9ffd9"></div>
<div class="vd" style="--c:#7c7c7c;left:199px;top:107px;height:20px;background-color:#fff"></div>
<div class="vd" style="--c:#fff;left:218px;top:107px;height:20px;background-color:#ecffec"></div>
<div class="vd" style="--c:#fff;left:418px;top:107px;height:20px;background-color:#ecffec"></div>
<div class="vd" style="--c:#fff;left:618px;top:107px;height:20px;background-color:#ecffec"></div>
<div class="vd" style="--c:#fff;left:818px;top:107px;height:20px;background-color:#ecffec"></div>
<div class="vd tl" style="left:55px;top:107px;height:20px"></div>
<div class="vd tl" style="left:75px;top:107px;height:10px"></div>
<div class="hd tl" style="left:76px;top:116px;width:12px"></div>
<span class="t" style="left:92.40px;top:110px;letter-spacing:-0.015px;color:#800080;">Combined Mesh</span>
<div style="left:200px;top:107px;width:18px;height:19px;overflow:hidden">
<span class="t" style="left:-1.40px;top:3px;letter-spacing:-0.2px;color:#800080">...</span>
</div>
<span class="t" style="left:231.20px;top:110px;letter-spacing:-0.402px;color:#808080;">Precombined\0002263E_151DC2...</span>
<span class="t" style="left:431.20px;top:110px;letter-spacing:-0.402px;color:#808080;">Precombined\0002263E_151DC2...</span>
<span class="t" style="left:631.20px;top:110px;letter-spacing:-0.402px;color:#808080;">Precombined\0002263E_151DC2...</span>
<div style="left:819px;top:107px;width:188px;height:19px;overflow:hidden">
<span class="t" style="left:12.20px;top:3px;letter-spacing:-0.402px;color:#808080;">Precombined\0002263E_151DC2...</span>
</div>
<div style="left:0px;top:127px;width:199px;height:19px;background:#ffd9d9;"></div>
<div style="left:200px;top:127px;width:18px;height:19px;background:#ffd9d9;"></div>
<div style="left:219px;top:127px;width:199px;height:19px;background:#ffd9d9;"></div>
<div style="left:419px;top:127px;width:199px;height:19px;background:#ffd9d9;"></div>
<div style="left:619px;top:127px;width:199px;height:19px;background:#ffecec;"></div>
<div style="left:819px;top:127px;width:189px;height:19px;background:#ffecec;"></div>
<div class="hd" style="--c:#fff;left:0;top:146px;width:1007px;background-color:#ffd9d9"></div>
<div class="hd" style="--c:#fff;left:619px;top:146px;width:388px;background-color:#ffecec"></div>
<div class="vd" style="--c:#7c7c7c;left:199px;top:127px;height:20px;background-color:#fff"></div>
<div class="vd" style="--c:#fff;left:218px;top:127px;height:20px;background-color:#ffecec"></div>
<div class="vd" style="--c:#fff;left:418px;top:127px;height:20px;background-color:#ffecec"></div>
<div class="vd" style="--c:#fff;left:618px;top:127px;height:20px;background-color:#fff4f4"></div>
<div class="vd" style="--c:#fff;left:818px;top:127px;height:20px;background-color:#fff4f4"></div>
<div class="vd tl" style="left:55px;top:127px;height:20px"></div>
<div class="hd tl" style="left:61px;top:136px;width:7px"></div>
<div class="pm" style="left:52px;top:132px"></div>
<span class="t" style="left:72.20px;top:130px;letter-spacing:-0.420px;color:#ff0000;">Reference</span>
<div style="left:0px;top:147px;width:199px;height:19px;background:#ffd9d9;"></div>
<div style="left:200px;top:147px;width:18px;height:19px;background:#ffd9d9;"></div>
<div style="left:219px;top:147px;width:199px;height:19px;background:#ffd9d9;"></div>
<div style="left:419px;top:147px;width:199px;height:19px;background:#ffd9d9;"></div>
<div style="left:619px;top:147px;width:199px;height:19px;background:#ffecec;"></div>
<div style="left:819px;top:147px;width:189px;height:19px;background:#ffecec;"></div>
<div class="hd" style="--c:#fff;left:0;top:166px;width:1007px;background-color:#ffd9d9"></div>
<div class="hd" style="--c:#fff;left:619px;top:166px;width:388px;background-color:#ffecec"></div>
<div class="vd" style="--c:#7c7c7c;left:199px;top:147px;height:20px;background-color:#fff"></div>
<div class="vd" style="--c:#fff;left:218px;top:147px;height:20px;background-color:#ffecec"></div>
<div class="vd" style="--c:#fff;left:418px;top:147px;height:20px;background-color:#ffecec"></div>
<div class="vd" style="--c:#fff;left:618px;top:147px;height:20px;background-color:#fff4f4"></div>
<div class="vd" style="--c:#fff;left:818px;top:147px;height:20px;background-color:#fff4f4"></div>
<div class="vd tl" style="left:55px;top:147px;height:20px"></div>
<div class="vd tl" style="left:75px;top:147px;height:20px"></div>
<div class="hd tl" style="left:76px;top:156px;width:12px"></div>
<span class="t" style="left:92.40px;top:150px;letter-spacing:-0.445px;color:#ff0000;">Reference</span>
<div style="left:200px;top:147px;width:18px;height:19px;overflow:hidden">
<span class="t" style="left:-2.70px;top:3px;letter-spacing:-0.2px;color:#800080">F...</span>
</div>
<span class="t" style="left:231.20px;top:150px;letter-spacing:-0.420px;color:#808080;">[REFR:0005870A] (places PictureF...</span>
<span class="t" style="left:431.20px;top:150px;letter-spacing:-0.420px;color:#808080;">[REFR:0005870A] (places PictureF...</span>
<div style="left:0px;top:167px;width:199px;height:19px;background:#ffd9d9;"></div>
<div style="left:200px;top:167px;width:18px;height:19px;background:#ffd9d9;"></div>
<div style="left:219px;top:167px;width:199px;height:19px;background:#ffd9d9;"></div>
<div style="left:419px;top:167px;width:199px;height:19px;background:#ffd9d9;"></div>
<div style="left:619px;top:167px;width:199px;height:19px;background:#ffecec;"></div>
<div style="left:819px;top:167px;width:189px;height:19px;background:#ffecec;"></div>
<div class="hd" style="--c:#fff;left:0;top:186px;width:1007px;background-color:#ffd9d9"></div>
<div class="hd" style="--c:#fff;left:619px;top:186px;width:388px;background-color:#ffecec"></div>
<div class="vd" style="--c:#7c7c7c;left:199px;top:167px;height:20px;background-color:#fff"></div>
<div class="vd" style="--c:#fff;left:218px;top:167px;height:20px;background-color:#ffecec"></div>
<div class="vd" style="--c:#fff;left:418px;top:167px;height:20px;background-color:#ffecec"></div>
<div class="vd" style="--c:#fff;left:618px;top:167px;height:20px;background-color:#fff4f4"></div>
<div class="vd" style="--c:#fff;left:818px;top:167px;height:20px;background-color:#fff4f4"></div>
<div class="vd tl" style="left:55px;top:167px;height:20px"></div>
<div class="vd tl" style="left:75px;top:167px;height:10px"></div>
<div class="hd tl" style="left:76px;top:176px;width:12px"></div>
<span class="t" style="left:92.40px;top:170px;letter-spacing:-0.015px;color:#ff0000;">Combined Mesh</span>
<div style="left:200px;top:167px;width:18px;height:19px;overflow:hidden">
<span class="t" style="left:-5.37px;top:3px;letter-spacing:-0.2px;color:#800080">D...</span>
</div>
<span class="t" style="left:231.20px;top:170px;letter-spacing:-0.411px;color:#808080;">Precombined\0002263E_216403D...</span>
<span class="t" style="left:431.20px;top:170px;letter-spacing:-0.411px;color:#808080;">Precombined\0002263E_216403D...</span>
<div style="left:0px;top:187px;width:199px;height:19px;background:#ffd9d9;"></div>
<div style="left:200px;top:187px;width:18px;height:19px;background:#ffd9d9;"></div>
<div style="left:219px;top:187px;width:199px;height:19px;background:#ffd9d9;"></div>
<div style="left:419px;top:187px;width:199px;height:19px;background:#ffd9d9;"></div>
<div style="left:619px;top:187px;width:199px;height:19px;background:#ffecec;"></div>
<div style="left:819px;top:187px;width:189px;height:19px;background:#ffecec;"></div>
<div class="hd" style="--c:#fff;left:0;top:206px;width:1007px;background-color:#ffd9d9"></div>
<div class="hd" style="--c:#fff;left:619px;top:206px;width:388px;background-color:#ffecec"></div>
<div class="vd" style="--c:#7c7c7c;left:199px;top:187px;height:20px;background-color:#fff"></div>
<div class="vd" style="--c:#fff;left:218px;top:187px;height:20px;background-color:#ffecec"></div>
<div class="vd" style="--c:#fff;left:418px;top:187px;height:20px;background-color:#ffecec"></div>
<div class="vd" style="--c:#fff;left:618px;top:187px;height:20px;background-color:#fff4f4"></div>
<div class="vd" style="--c:#fff;left:818px;top:187px;height:20px;background-color:#fff4f4"></div>
<div class="vd tl" style="left:55px;top:187px;height:20px"></div>
<div class="hd tl" style="left:61px;top:196px;width:7px"></div>
<div class="pm" style="left:52px;top:192px"></div>
<span class="t" style="left:72.20px;top:190px;letter-spacing:-0.420px;color:#ff0000;">Reference</span>
<div style="left:0px;top:207px;width:199px;height:19px;background:#ffd9d9;"></div>
<div style="left:200px;top:207px;width:18px;height:19px;background:#ffd9d9;"></div>
<div style="left:219px;top:207px;width:199px;height:19px;background:#ffd9d9;"></div>
<div style="left:419px;top:207px;width:199px;height:19px;background:#ffd9d9;"></div>
<div style="left:619px;top:207px;width:199px;height:19px;background:#ffecec;"></div>
<div style="left:819px;top:207px;width:189px;height:19px;background:#ffecec;"></div>
<div class="hd" style="--c:#fff;left:0;top:226px;width:1007px;background-color:#ffd9d9"></div>
<div class="hd" style="--c:#fff;left:619px;top:226px;width:388px;background-color:#ffecec"></div>
<div class="vd" style="--c:#7c7c7c;left:199px;top:207px;height:20px;background-color:#fff"></div>
<div class="vd" style="--c:#fff;left:218px;top:207px;height:20px;background-color:#ffecec"></div>
<div class="vd" style="--c:#fff;left:418px;top:207px;height:20px;background-color:#ffecec"></div>
<div class="vd" style="--c:#fff;left:618px;top:207px;height:20px;background-color:#fff4f4"></div>
<div class="vd" style="--c:#fff;left:818px;top:207px;height:20px;background-color:#fff4f4"></div>
<div class="vd tl" style="left:55px;top:207px;height:20px"></div>
<div class="vd tl" style="left:75px;top:207px;height:20px"></div>
<div class="hd tl" style="left:76px;top:216px;width:12px"></div>
<span class="t" style="left:92.40px;top:210px;letter-spacing:-0.445px;color:#ff0000;">Reference</span>
<div style="left:200px;top:207px;width:18px;height:19px;overflow:hidden">
<span class="t" style="left:-2.70px;top:3px;letter-spacing:-0.2px;color:#800080">F...</span>
</div>
<span class="t" style="left:231.20px;top:210px;letter-spacing:-0.453px;color:#808080;">[REFR:0005870B] (places PictureF...</span>
<span class="t" style="left:431.20px;top:210px;letter-spacing:-0.453px;color:#808080;">[REFR:0005870B] (places PictureF...</span>
<div style="left:0px;top:227px;width:199px;height:19px;background:#ffd9d9;"></div>
<div style="left:200px;top:227px;width:18px;height:19px;background:#ffd9d9;"></div>
<div style="left:219px;top:227px;width:199px;height:19px;background:#ffd9d9;"></div>
<div style="left:419px;top:227px;width:199px;height:19px;background:#ffd9d9;"></div>
<div style="left:619px;top:227px;width:199px;height:19px;background:#ffecec;"></div>
<div style="left:819px;top:227px;width:189px;height:19px;background:#ffecec;"></div>
<div class="hd" style="--c:#fff;left:0;top:246px;width:1007px;background-color:#ffd9d9"></div>
<div class="hd" style="--c:#fff;left:619px;top:246px;width:388px;background-color:#ffecec"></div>
<div class="vd" style="--c:#7c7c7c;left:199px;top:227px;height:20px;background-color:#fff"></div>
<div class="vd" style="--c:#fff;left:218px;top:227px;height:20px;background-color:#ffecec"></div>
<div class="vd" style="--c:#fff;left:418px;top:227px;height:20px;background-color:#ffecec"></div>
<div class="vd" style="--c:#fff;left:618px;top:227px;height:20px;background-color:#fff4f4"></div>
<div class="vd" style="--c:#fff;left:818px;top:227px;height:20px;background-color:#fff4f4"></div>
<div class="vd tl" style="left:55px;top:227px;height:20px"></div>
<div class="vd tl" style="left:75px;top:227px;height:10px"></div>
<div class="hd tl" style="left:76px;top:236px;width:12px"></div>
<span class="t" style="left:92.40px;top:230px;letter-spacing:-0.015px;color:#ff0000;">Combined Mesh</span>
<div style="left:200px;top:227px;width:18px;height:19px;overflow:hidden">
<span class="t" style="left:-4.70px;top:3px;letter-spacing:-0.2px;color:#800080">E...</span>
</div>
<span class="t" style="left:231.20px;top:230px;letter-spacing:-0.456px;color:#808080;">Precombined\0002263E_26C806E...</span>
<span class="t" style="left:431.20px;top:230px;letter-spacing:-0.456px;color:#808080;">Precombined\0002263E_26C806E...</span>
<div style="left:0px;top:247px;width:199px;height:19px;background:#ffd9d9;"></div>
<div style="left:200px;top:247px;width:18px;height:19px;background:#ffd9d9;"></div>
<div style="left:219px;top:247px;width:199px;height:19px;background:#ffd9d9;"></div>
<div style="left:419px;top:247px;width:199px;height:19px;background:#ffd9d9;"></div>
<div style="left:619px;top:247px;width:199px;height:19px;background:#ffecec;"></div>
<div style="left:819px;top:247px;width:189px;height:19px;background:#ffecec;"></div>
<div class="hd" style="--c:#fff;left:0;top:266px;width:1007px;background-color:#ffd9d9"></div>
<div class="hd" style="--c:#fff;left:619px;top:266px;width:388px;background-color:#ffecec"></div>
<div class="vd" style="--c:#7c7c7c;left:199px;top:247px;height:20px;background-color:#fff"></div>
<div class="vd" style="--c:#fff;left:218px;top:247px;height:20px;background-color:#ffecec"></div>
<div class="vd" style="--c:#fff;left:418px;top:247px;height:20px;background-color:#ffecec"></div>
<div class="vd" style="--c:#fff;left:618px;top:247px;height:20px;background-color:#fff4f4"></div>
<div class="vd" style="--c:#fff;left:818px;top:247px;height:20px;background-color:#fff4f4"></div>
<div class="vd tl" style="left:55px;top:247px;height:20px"></div>
<div class="hd tl" style="left:61px;top:256px;width:7px"></div>
<div class="pm" style="left:52px;top:252px"></div>
<span class="t" style="left:72.20px;top:250px;letter-spacing:-0.420px;color:#ff0000;">Reference</span>
<div style="left:0px;top:267px;width:199px;height:19px;background:#ffd9d9;"></div>
<div style="left:200px;top:267px;width:18px;height:19px;background:#ffd9d9;"></div>
<div style="left:219px;top:267px;width:199px;height:19px;background:#ffd9d9;"></div>
<div style="left:419px;top:267px;width:199px;height:19px;background:#ffd9d9;"></div>
<div style="left:619px;top:267px;width:199px;height:19px;background:#ffecec;"></div>
<div style="left:819px;top:267px;width:189px;height:19px;background:#ffecec;"></div>
<div class="hd" style="--c:#fff;left:0;top:286px;width:1007px;background-color:#ffd9d9"></div>
<div class="hd" style="--c:#fff;left:619px;top:286px;width:388px;background-color:#ffecec"></div>
<div class="vd" style="--c:#7c7c7c;left:199px;top:267px;height:20px;background-color:#fff"></div>
<div class="vd" style="--c:#fff;left:218px;top:267px;height:20px;background-color:#ffecec"></div>
<div class="vd" style="--c:#fff;left:418px;top:267px;height:20px;background-color:#ffecec"></div>
<div class="vd" style="--c:#fff;left:618px;top:267px;height:20px;background-color:#fff4f4"></div>
<div class="vd" style="--c:#fff;left:818px;top:267px;height:20px;background-color:#fff4f4"></div>
<div class="vd tl" style="left:55px;top:267px;height:20px"></div>
<div class="vd tl" style="left:75px;top:267px;height:20px"></div>
<div class="hd tl" style="left:76px;top:276px;width:12px"></div>
<span class="t" style="left:92.40px;top:270px;letter-spacing:-0.445px;color:#ff0000;">Reference</span>
<div style="left:200px;top:267px;width:18px;height:19px;overflow:hidden">
<span class="t" style="left:-2.70px;top:3px;letter-spacing:-0.2px;color:#800080">F...</span>
</div>
<span class="t" style="left:231.20px;top:270px;letter-spacing:-0.440px;color:#808080;">[REFR:0005870C] (places PictureF...</span>
<span class="t" style="left:431.20px;top:270px;letter-spacing:-0.440px;color:#808080;">[REFR:0005870C] (places PictureF...</span>
<div style="left:0px;top:287px;width:199px;height:19px;background:#ffd9d9;"></div>
<div style="left:200px;top:287px;width:18px;height:19px;background:#ffd9d9;"></div>
<div style="left:219px;top:287px;width:199px;height:19px;background:#ffd9d9;"></div>
<div style="left:419px;top:287px;width:199px;height:19px;background:#ffd9d9;"></div>
<div style="left:619px;top:287px;width:199px;height:19px;background:#ffecec;"></div>
<div style="left:819px;top:287px;width:189px;height:19px;background:#ffecec;"></div>
<div class="hd" style="--c:#fff;left:0;top:306px;width:1007px;background-color:#ffd9d9"></div>
<div class="hd" style="--c:#fff;left:619px;top:306px;width:388px;background-color:#ffecec"></div>
<div class="vd" style="--c:#7c7c7c;left:199px;top:287px;height:20px;background-color:#fff"></div>
<div class="vd" style="--c:#fff;left:218px;top:287px;height:20px;background-color:#ffecec"></div>
<div class="vd" style="--c:#fff;left:418px;top:287px;height:20px;background-color:#ffecec"></div>
<div class="vd" style="--c:#fff;left:618px;top:287px;height:20px;background-color:#fff4f4"></div>
<div class="vd" style="--c:#fff;left:818px;top:287px;height:20px;background-color:#fff4f4"></div>
<div class="vd tl" style="left:55px;top:287px;height:20px"></div>
<div class="vd tl" style="left:75px;top:287px;height:10px"></div>
<div class="hd tl" style="left:76px;top:296px;width:12px"></div>
<span class="t" style="left:92.40px;top:290px;letter-spacing:-0.015px;color:#ff0000;">Combined Mesh</span>
<div style="left:200px;top:287px;width:18px;height:19px;overflow:hidden">
<span class="t" style="left:-5.37px;top:3px;letter-spacing:-0.2px;color:#800080">D...</span>
</div>
<span class="t" style="left:231.20px;top:290px;letter-spacing:-0.411px;color:#808080;">Precombined\0002263E_216403D...</span>
<span class="t" style="left:431.20px;top:290px;letter-spacing:-0.411px;color:#808080;">Precombined\0002263E_216403D...</span>
<div style="left:0px;top:307px;width:199px;height:19px;background:#ffd9d9;"></div>
<div style="left:200px;top:307px;width:18px;height:19px;background:#ffd9d9;"></div>
<div style="left:219px;top:307px;width:199px;height:19px;background:#ffd9d9;"></div>
<div style="left:419px;top:307px;width:199px;height:19px;background:#ffd9d9;"></div>
<div style="left:619px;top:307px;width:199px;height:19px;background:#ffecec;"></div>
<div style="left:819px;top:307px;width:189px;height:19px;background:#ffecec;"></div>
<div class="hd" style="--c:#fff;left:0;top:326px;width:1007px;background-color:#ffd9d9"></div>
<div class="hd" style="--c:#fff;left:619px;top:326px;width:388px;background-color:#ffecec"></div>
<div class="vd" style="--c:#7c7c7c;left:199px;top:307px;height:20px;background-color:#fff"></div>
<div class="vd" style="--c:#fff;left:218px;top:307px;height:20px;background-color:#ffecec"></div>
<div class="vd" style="--c:#fff;left:418px;top:307px;height:20px;background-color:#ffecec"></div>
<div class="vd" style="--c:#fff;left:618px;top:307px;height:20px;background-color:#fff4f4"></div>
<div class="vd" style="--c:#fff;left:818px;top:307px;height:20px;background-color:#fff4f4"></div>
<div class="vd tl" style="left:55px;top:307px;height:20px"></div>
<div class="hd tl" style="left:61px;top:316px;width:7px"></div>
<div class="pm" style="left:52px;top:312px"></div>
<span class="t" style="left:72.20px;top:310px;letter-spacing:-0.420px;color:#ff0000;">Reference</span>
<div style="left:0px;top:327px;width:199px;height:19px;background:#ffd9d9;"></div>
<div style="left:200px;top:327px;width:18px;height:19px;background:#ffd9d9;"></div>
<div style="left:219px;top:327px;width:199px;height:19px;background:#ffd9d9;"></div>
<div style="left:419px;top:327px;width:199px;height:19px;background:#ffd9d9;"></div>
<div style="left:619px;top:327px;width:199px;height:19px;background:#ffecec;"></div>
<div style="left:819px;top:327px;width:189px;height:19px;background:#ffecec;"></div>
<div class="hd" style="--c:#fff;left:0;top:346px;width:1007px;background-color:#ffd9d9"></div>
<div class="hd" style="--c:#fff;left:619px;top:346px;width:388px;background-color:#ffecec"></div>
<div class="vd" style="--c:#7c7c7c;left:199px;top:327px;height:20px;background-color:#fff"></div>
<div class="vd" style="--c:#fff;left:218px;top:327px;height:20px;background-color:#ffecec"></div>
<div class="vd" style="--c:#fff;left:418px;top:327px;height:20px;background-color:#ffecec"></div>
<div class="vd" style="--c:#fff;left:618px;top:327px;height:20px;background-color:#fff4f4"></div>
<div class="vd" style="--c:#fff;left:818px;top:327px;height:20px;background-color:#fff4f4"></div>
<div class="vd tl" style="left:55px;top:327px;height:20px"></div>
<div class="vd tl" style="left:75px;top:327px;height:20px"></div>
<div class="hd tl" style="left:76px;top:336px;width:12px"></div>
<span class="t" style="left:92.40px;top:330px;letter-spacing:-0.445px;color:#ff0000;">Reference</span>
<div style="left:200px;top:327px;width:18px;height:19px;overflow:hidden">
<span class="t" style="left:-2.70px;top:3px;letter-spacing:-0.2px;color:#800080">F...</span>
</div>
<span class="t" style="left:231.20px;top:330px;letter-spacing:-0.440px;color:#808080;">[REFR:0005870D] (places PictureF...</span>
<span class="t" style="left:431.20px;top:330px;letter-spacing:-0.440px;color:#808080;">[REFR:0005870D] (places PictureF...</span>
<div style="left:0px;top:347px;width:199px;height:19px;background:#ffd9d9;"></div>
<div style="left:200px;top:347px;width:18px;height:19px;background:#ffd9d9;"></div>
<div style="left:219px;top:347px;width:199px;height:19px;background:#ffd9d9;"></div>
<div style="left:419px;top:347px;width:199px;height:19px;background:#ffd9d9;"></div>
<div style="left:619px;top:347px;width:199px;height:19px;background:#ffecec;"></div>
<div style="left:819px;top:347px;width:189px;height:19px;background:#ffecec;"></div>
<div class="hd" style="--c:#fff;left:0;top:366px;width:1007px;background-color:#ffd9d9"></div>
<div class="hd" style="--c:#fff;left:619px;top:366px;width:388px;background-color:#ffecec"></div>
<div class="vd" style="--c:#7c7c7c;left:199px;top:347px;height:20px;background-color:#fff"></div>
<div class="vd" style="--c:#fff;left:218px;top:347px;height:20px;background-color:#ffecec"></div>
<div class="vd" style="--c:#fff;left:418px;top:347px;height:20px;background-color:#ffecec"></div>
<div class="vd" style="--c:#fff;left:618px;top:347px;height:20px;background-color:#fff4f4"></div>
<div class="vd" style="--c:#fff;left:818px;top:347px;height:20px;background-color:#fff4f4"></div>
<div class="vd tl" style="left:55px;top:347px;height:20px"></div>
<div class="vd tl" style="left:75px;top:347px;height:10px"></div>
<div class="hd tl" style="left:76px;top:356px;width:12px"></div>
<span class="t" style="left:92.40px;top:350px;letter-spacing:-0.015px;color:#ff0000;">Combined Mesh</span>
<div style="left:200px;top:347px;width:18px;height:19px;overflow:hidden">
<span class="t" style="left:-1.40px;top:3px;letter-spacing:-0.2px;color:#800080">...</span>
</div>
<span class="t" style="left:231.20px;top:350px;letter-spacing:-0.417px;color:#808080;">Precombined\0002263E_12B1C7...</span>
<span class="t" style="left:431.20px;top:350px;letter-spacing:-0.417px;color:#808080;">Precombined\0002263E_12B1C7...</span>
<div style="left:0px;top:367px;width:199px;height:19px;background:#ffd9d9;"></div>
<div style="left:200px;top:367px;width:18px;height:19px;background:#ffd9d9;"></div>
<div style="left:219px;top:367px;width:199px;height:19px;background:#ffd9d9;"></div>
<div style="left:419px;top:367px;width:199px;height:19px;background:#ffd9d9;"></div>
<div style="left:619px;top:367px;width:199px;height:19px;background:#ffecec;"></div>
<div style="left:819px;top:367px;width:189px;height:19px;background:#ffecec;"></div>
<div class="hd" style="--c:#fff;left:0;top:386px;width:1007px;background-color:#ffd9d9"></div>
<div class="hd" style="--c:#fff;left:619px;top:386px;width:388px;background-color:#ffecec"></div>
<div class="vd" style="--c:#7c7c7c;left:199px;top:367px;height:20px;background-color:#fff"></div>
<div class="vd" style="--c:#fff;left:218px;top:367px;height:20px;background-color:#ffecec"></div>
<div class="vd" style="--c:#fff;left:418px;top:367px;height:20px;background-color:#ffecec"></div>
<div class="vd" style="--c:#fff;left:618px;top:367px;height:20px;background-color:#fff4f4"></div>
<div class="vd" style="--c:#fff;left:818px;top:367px;height:20px;background-color:#fff4f4"></div>
<div class="vd tl" style="left:55px;top:367px;height:20px"></div>
<div class="hd tl" style="left:61px;top:376px;width:7px"></div>
<div class="pm" style="left:52px;top:372px"></div>
<span class="t" style="left:72.20px;top:370px;letter-spacing:-0.420px;color:#ff0000;">Reference</span>
<div style="left:0px;top:387px;width:199px;height:19px;background:#ffd9d9;"></div>
<div style="left:200px;top:387px;width:18px;height:19px;background:#ffd9d9;"></div>
<div style="left:219px;top:387px;width:199px;height:19px;background:#ffd9d9;"></div>
<div style="left:419px;top:387px;width:199px;height:19px;background:#ffd9d9;"></div>
<div style="left:619px;top:387px;width:199px;height:19px;background:#ffecec;"></div>
<div style="left:819px;top:387px;width:189px;height:19px;background:#ffecec;"></div>
<div class="hd" style="--c:#fff;left:0;top:406px;width:1007px;background-color:#ffd9d9"></div>
<div class="hd" style="--c:#fff;left:619px;top:406px;width:388px;background-color:#ffecec"></div>
<div class="vd" style="--c:#7c7c7c;left:199px;top:387px;height:20px;background-color:#fff"></div>
<div class="vd" style="--c:#fff;left:218px;top:387px;height:20px;background-color:#ffecec"></div>
<div class="vd" style="--c:#fff;left:418px;top:387px;height:20px;background-color:#ffecec"></div>
<div class="vd" style="--c:#fff;left:618px;top:387px;height:20px;background-color:#fff4f4"></div>
<div class="vd" style="--c:#fff;left:818px;top:387px;height:20px;background-color:#fff4f4"></div>
<div class="vd tl" style="left:55px;top:387px;height:20px"></div>
<div class="vd tl" style="left:75px;top:387px;height:20px"></div>
<div class="hd tl" style="left:76px;top:396px;width:12px"></div>
<span class="t" style="left:92.40px;top:390px;letter-spacing:-0.445px;color:#ff0000;">Reference</span>
<div style="left:200px;top:387px;width:18px;height:19px;overflow:hidden">
<span class="t" style="left:-2.70px;top:3px;letter-spacing:-0.2px;color:#800080">F...</span>
</div>
<span class="t" style="left:231.20px;top:390px;letter-spacing:-0.479px;color:#808080;">[REFR:0005870E] (places PictureF...</span>
<span class="t" style="left:431.20px;top:390px;letter-spacing:-0.479px;color:#808080;">[REFR:0005870E] (places PictureF...</span>
<div style="left:0px;top:407px;width:199px;height:19px;background:#ffd9d9;"></div>
<div style="left:200px;top:407px;width:18px;height:19px;background:#ffd9d9;"></div>
<div style="left:219px;top:407px;width:199px;height:19px;background:#ffd9d9;"></div>
<div style="left:419px;top:407px;width:199px;height:19px;background:#ffd9d9;"></div>
<div style="left:619px;top:407px;width:199px;height:19px;background:#ffecec;"></div>
<div style="left:819px;top:407px;width:189px;height:19px;background:#ffecec;"></div>
<div class="hd" style="--c:#fff;left:0;top:426px;width:1007px;background-color:#ffd9d9"></div>
<div class="hd" style="--c:#fff;left:619px;top:426px;width:388px;background-color:#ffecec"></div>
<div class="vd" style="--c:#7c7c7c;left:199px;top:407px;height:20px;background-color:#fff"></div>
<div class="vd" style="--c:#fff;left:218px;top:407px;height:20px;background-color:#ffecec"></div>
<div class="vd" style="--c:#fff;left:418px;top:407px;height:20px;background-color:#ffecec"></div>
<div class="vd" style="--c:#fff;left:618px;top:407px;height:20px;background-color:#fff4f4"></div>
<div class="vd" style="--c:#fff;left:818px;top:407px;height:20px;background-color:#fff4f4"></div>
<div class="vd tl" style="left:55px;top:407px;height:20px"></div>
<div class="vd tl" style="left:75px;top:407px;height:10px"></div>
<div class="hd tl" style="left:76px;top:416px;width:12px"></div>
<span class="t" style="left:92.40px;top:410px;letter-spacing:-0.015px;color:#ff0000;">Combined Mesh</span>
<div style="left:200px;top:407px;width:18px;height:19px;overflow:hidden">
<span class="t" style="left:-1.40px;top:3px;letter-spacing:-0.2px;color:#800080">...</span>
</div>
<span class="t" style="left:231.20px;top:410px;letter-spacing:-0.417px;color:#808080;">Precombined\0002263E_12B1C7...</span>
<span class="t" style="left:431.20px;top:410px;letter-spacing:-0.417px;color:#808080;">Precombined\0002263E_12B1C7...</span>
<div style="left:0px;top:427px;width:199px;height:19px;background:#ffd9d9;"></div>
<div style="left:200px;top:427px;width:18px;height:19px;background:#ffd9d9;"></div>
<div style="left:219px;top:427px;width:199px;height:19px;background:#ffd9d9;"></div>
<div style="left:419px;top:427px;width:199px;height:19px;background:#ffd9d9;"></div>
<div style="left:619px;top:427px;width:199px;height:19px;background:#ffecec;"></div>
<div style="left:819px;top:427px;width:189px;height:19px;background:#ffecec;"></div>
<div class="hd" style="--c:#fff;left:0;top:446px;width:1007px;background-color:#ffd9d9"></div>
<div class="hd" style="--c:#fff;left:619px;top:446px;width:388px;background-color:#ffecec"></div>
<div class="vd" style="--c:#7c7c7c;left:199px;top:427px;height:20px;background-color:#fff"></div>
<div class="vd" style="--c:#fff;left:218px;top:427px;height:20px;background-color:#ffecec"></div>
<div class="vd" style="--c:#fff;left:418px;top:427px;height:20px;background-color:#ffecec"></div>
<div class="vd" style="--c:#fff;left:618px;top:427px;height:20px;background-color:#fff4f4"></div>
<div class="vd" style="--c:#fff;left:818px;top:427px;height:20px;background-color:#fff4f4"></div>
<div class="vd tl" style="left:55px;top:427px;height:20px"></div>
<div class="hd tl" style="left:61px;top:436px;width:7px"></div>
<div class="pm" style="left:52px;top:432px"></div>
<span class="t" style="left:72.20px;top:430px;letter-spacing:-0.420px;color:#ff0000;">Reference</span>
<div style="left:0px;top:447px;width:199px;height:19px;background:#ffd9d9;"></div>
<div style="left:200px;top:447px;width:18px;height:19px;background:#ffd9d9;"></div>
<div style="left:219px;top:447px;width:199px;height:19px;background:#ffd9d9;"></div>
<div style="left:419px;top:447px;width:199px;height:19px;background:#ffd9d9;"></div>
<div style="left:619px;top:447px;width:199px;height:19px;background:#ffecec;"></div>
<div style="left:819px;top:447px;width:189px;height:19px;background:#ffecec;"></div>
<div class="hd" style="--c:#fff;left:0;top:466px;width:1007px;background-color:#ffd9d9"></div>
<div class="hd" style="--c:#fff;left:619px;top:466px;width:388px;background-color:#ffecec"></div>
<div class="vd" style="--c:#7c7c7c;left:199px;top:447px;height:20px;background-color:#fff"></div>
<div class="vd" style="--c:#fff;left:218px;top:447px;height:20px;background-color:#ffecec"></div>
<div class="vd" style="--c:#fff;left:418px;top:447px;height:20px;background-color:#ffecec"></div>
<div class="vd" style="--c:#fff;left:618px;top:447px;height:20px;background-color:#fff4f4"></div>
<div class="vd" style="--c:#fff;left:818px;top:447px;height:20px;background-color:#fff4f4"></div>
<div class="vd tl" style="left:55px;top:447px;height:20px"></div>
<div class="vd tl" style="left:75px;top:447px;height:20px"></div>
<div class="hd tl" style="left:76px;top:456px;width:12px"></div>
<span class="t" style="left:92.40px;top:450px;letter-spacing:-0.445px;color:#ff0000;">Reference</span>
<div style="left:200px;top:447px;width:18px;height:19px;overflow:hidden">
<span class="t" style="left:-2.70px;top:3px;letter-spacing:-0.2px;color:#800080">F...</span>
</div>
<span class="t" style="left:231.20px;top:450px;letter-spacing:-0.459px;color:#808080;">[REFR:0005870F] (places PictureF...</span>
<span class="t" style="left:431.20px;top:450px;letter-spacing:-0.459px;color:#808080;">[REFR:0005870F] (places PictureF...</span>
<div style="left:0px;top:467px;width:199px;height:19px;background:#ffd9d9;"></div>
<div style="left:200px;top:467px;width:18px;height:19px;background:#ffd9d9;"></div>
<div style="left:219px;top:467px;width:199px;height:19px;background:#ffd9d9;"></div>
<div style="left:419px;top:467px;width:199px;height:19px;background:#ffd9d9;"></div>
<div style="left:619px;top:467px;width:199px;height:19px;background:#ffecec;"></div>
<div style="left:819px;top:467px;width:189px;height:19px;background:#ffecec;"></div>
<div class="hd" style="--c:#fff;left:0;top:486px;width:1007px;background-color:#ffd9d9"></div>
<div class="hd" style="--c:#fff;left:619px;top:486px;width:388px;background-color:#ffecec"></div>
<div class="vd" style="--c:#7c7c7c;left:199px;top:467px;height:20px;background-color:#fff"></div>
<div class="vd" style="--c:#fff;left:218px;top:467px;height:20px;background-color:#ffecec"></div>
<div class="vd" style="--c:#fff;left:418px;top:467px;height:20px;background-color:#ffecec"></div>
<div class="vd" style="--c:#fff;left:618px;top:467px;height:20px;background-color:#fff4f4"></div>
<div class="vd" style="--c:#fff;left:818px;top:467px;height:20px;background-color:#fff4f4"></div>
<div class="vd tl" style="left:55px;top:467px;height:20px"></div>
<div class="vd tl" style="left:75px;top:467px;height:10px"></div>
<div class="hd tl" style="left:76px;top:476px;width:12px"></div>
<span class="t" style="left:92.40px;top:470px;letter-spacing:-0.015px;color:#ff0000;">Combined Mesh</span>
<div style="left:200px;top:467px;width:18px;height:19px;overflow:hidden">
<span class="t" style="left:-1.40px;top:3px;letter-spacing:-0.2px;color:#800080">...</span>
</div>
<span class="t" style="left:231.20px;top:470px;letter-spacing:-0.402px;color:#808080;">Precombined\0002263E_151DC2...</span>
<span class="t" style="left:431.20px;top:470px;letter-spacing:-0.402px;color:#808080;">Precombined\0002263E_151DC2...</span>
<div style="left:0px;top:487px;width:199px;height:19px;background:#d9ffd9;"></div>
<div style="left:200px;top:487px;width:18px;height:19px;background:#d9ffd9;"></div>
<div style="left:219px;top:487px;width:199px;height:19px;background:#d9ffd9;"></div>
<div style="left:419px;top:487px;width:199px;height:19px;background:#d9ffd9;"></div>
<div style="left:619px;top:487px;width:199px;height:19px;background:#d9ffd9;"></div>
<div style="left:819px;top:487px;width:189px;height:19px;background:#d9ffd9;"></div>
<div class="hd" style="--c:#fff;left:0;top:506px;width:1007px;background-color:#d9ffd9"></div>
<div class="vd" style="--c:#7c7c7c;left:199px;top:487px;height:20px;background-color:#fff"></div>
<div class="vd" style="--c:#fff;left:218px;top:487px;height:20px;background-color:#ecffec"></div>
<div class="vd" style="--c:#fff;left:418px;top:487px;height:20px;background-color:#ecffec"></div>
<div class="vd" style="--c:#fff;left:618px;top:487px;height:20px;background-color:#ecffec"></div>
<div class="vd" style="--c:#fff;left:818px;top:487px;height:20px;background-color:#ecffec"></div>
<div class="vd tl" style="left:55px;top:487px;height:20px"></div>
<div class="hd tl" style="left:61px;top:496px;width:7px"></div>
<div class="pm" style="left:52px;top:492px"></div>
<span class="t" style="left:72.20px;top:490px;letter-spacing:-0.420px;color:#800080;">Reference</span>
<div style="left:0px;top:507px;width:199px;height:19px;background:#d9ffd9;"></div>
<div style="left:200px;top:507px;width:18px;height:19px;background:#d9ffd9;"></div>
<div style="left:219px;top:507px;width:199px;height:19px;background:#d9ffd9;"></div>
<div style="left:419px;top:507px;width:199px;height:19px;background:#d9ffd9;"></div>
<div style="left:619px;top:507px;width:199px;height:19px;background:#d9ffd9;"></div>
<div style="left:819px;top:507px;width:189px;height:19px;background:#d9ffd9;"></div>
<div class="hd" style="--c:#fff;left:0;top:526px;width:1007px;background-color:#d9ffd9"></div>
<div class="vd" style="--c:#7c7c7c;left:199px;top:507px;height:20px;background-color:#fff"></div>
<div class="vd" style="--c:#fff;left:218px;top:507px;height:20px;background-color:#ecffec"></div>
<div class="vd" style="--c:#fff;left:418px;top:507px;height:20px;background-color:#ecffec"></div>
<div class="vd" style="--c:#fff;left:618px;top:507px;height:20px;background-color:#ecffec"></div>
<div class="vd" style="--c:#fff;left:818px;top:507px;height:20px;background-color:#ecffec"></div>
<div class="vd tl" style="left:55px;top:507px;height:20px"></div>
<div class="vd tl" style="left:75px;top:507px;height:20px"></div>
<div class="hd tl" style="left:76px;top:516px;width:12px"></div>
<span class="t" style="left:92.40px;top:510px;letter-spacing:-0.445px;color:#800080;">Reference</span>
<div style="left:200px;top:507px;width:18px;height:19px;overflow:hidden">
<span class="t" style="left:-2.40px;top:3px;letter-spacing:-0.2px;color:#800080">...</span>
</div>
<span class="t" style="left:231.20px;top:510px;letter-spacing:-0.506px;color:#808080;">[REFR:00058719] (places SteamT...</span>
<span class="t" style="left:431.20px;top:510px;letter-spacing:-0.506px;color:#808080;">[REFR:00058719] (places SteamT...</span>
<span class="t" style="left:631.20px;top:510px;letter-spacing:-0.506px;color:#808080;">[REFR:00058719] (places SteamT...</span>
<div style="left:819px;top:507px;width:188px;height:19px;overflow:hidden">
<span class="t" style="left:12.20px;top:3px;letter-spacing:-0.506px;color:#808080;">[REFR:00058719] (places SteamT...</span>
</div>
<div style="left:0px;top:527px;width:199px;height:19px;background:#d9ffd9;"></div>
<div style="left:200px;top:527px;width:18px;height:19px;background:#d9ffd9;"></div>
<div style="left:219px;top:527px;width:199px;height:19px;background:#d9ffd9;"></div>
<div style="left:419px;top:527px;width:199px;height:19px;background:#d9ffd9;"></div>
<div style="left:619px;top:527px;width:199px;height:19px;background:#d9ffd9;"></div>
<div style="left:819px;top:527px;width:189px;height:19px;background:#d9ffd9;"></div>
<div class="hd" style="--c:#fff;left:0;top:546px;width:1007px;background-color:#d9ffd9"></div>
<div class="vd" style="--c:#7c7c7c;left:199px;top:527px;height:20px;background-color:#fff"></div>
<div class="vd" style="--c:#fff;left:218px;top:527px;height:20px;background-color:#ecffec"></div>
<div class="vd" style="--c:#fff;left:418px;top:527px;height:20px;background-color:#ecffec"></div>
<div class="vd" style="--c:#fff;left:618px;top:527px;height:20px;background-color:#ecffec"></div>
<div class="vd" style="--c:#fff;left:818px;top:527px;height:20px;background-color:#ecffec"></div>
<div class="vd tl" style="left:55px;top:527px;height:20px"></div>
<div class="vd tl" style="left:75px;top:527px;height:10px"></div>
<div class="hd tl" style="left:76px;top:536px;width:12px"></div>
<span class="t" style="left:92.40px;top:530px;letter-spacing:-0.015px;color:#800080;">Combined Mesh</span>
<div style="left:200px;top:527px;width:18px;height:19px;overflow:hidden">
<span class="t" style="left:-3.27px;top:3px;letter-spacing:-0.2px;color:#800080">5...</span>
</div>
<span class="t" style="left:231.20px;top:530px;letter-spacing:-0.482px;color:#808080;">Precombined\0002263E_39ED385...</span>
<span class="t" style="left:431.20px;top:530px;letter-spacing:-0.482px;color:#808080;">Precombined\0002263E_39ED385...</span>
<span class="t" style="left:631.20px;top:530px;letter-spacing:-0.482px;color:#808080;">Precombined\0002263E_39ED385...</span>
<div style="left:819px;top:527px;width:188px;height:19px;overflow:hidden">
<span class="t" style="left:12.20px;top:3px;letter-spacing:-0.482px;color:#808080;">Precombined\0002263E_39ED385...</span>
</div>
<div style="left:0px;top:547px;width:199px;height:19px;background:#d9ffd9;"></div>
<div style="left:200px;top:547px;width:18px;height:19px;background:#d9ffd9;"></div>
<div style="left:219px;top:547px;width:199px;height:19px;background:#d9ffd9;"></div>
<div style="left:419px;top:547px;width:199px;height:19px;background:#d9ffd9;"></div>
<div style="left:619px;top:547px;width:199px;height:19px;background:#d9ffd9;"></div>
<div style="left:819px;top:547px;width:189px;height:19px;background:#d9ffd9;"></div>
<div class="hd" style="--c:#fff;left:0;top:566px;width:1007px;background-color:#d9ffd9"></div>
<div class="vd" style="--c:#7c7c7c;left:199px;top:547px;height:20px;background-color:#fff"></div>
<div class="vd" style="--c:#fff;left:218px;top:547px;height:20px;background-color:#ecffec"></div>
<div class="vd" style="--c:#fff;left:418px;top:547px;height:20px;background-color:#ecffec"></div>
<div class="vd" style="--c:#fff;left:618px;top:547px;height:20px;background-color:#ecffec"></div>
<div class="vd" style="--c:#fff;left:818px;top:547px;height:20px;background-color:#ecffec"></div>
<div class="vd tl" style="left:55px;top:547px;height:20px"></div>
<div class="hd tl" style="left:61px;top:556px;width:7px"></div>
<div class="pm" style="left:52px;top:552px"></div>
<span class="t" style="left:72.20px;top:550px;letter-spacing:-0.420px;color:#800080;">Reference</span>
</div>
<div style="left:508px;top:113px;width:1024px;height:23px;background:#fff;"></div>
<div style="left:707px;top:113px;width:1px;height:23px;background:#e5e5e5;"></div>
<div style="left:726px;top:113px;width:1px;height:23px;background:#e5e5e5;"></div>
<div style="left:926px;top:113px;width:1px;height:23px;background:#e5e5e5;"></div>
<div style="left:1126px;top:113px;width:1px;height:23px;background:#e5e5e5;"></div>
<div style="left:1326px;top:113px;width:1px;height:23px;background:#e5e5e5;"></div>
<div style="left:1526px;top:113px;width:1px;height:23px;background:#e5e5e5;"></div>
<span class="t" style="left:733.20px;top:118px;letter-spacing:-0.191px;color:#808080;">[09] cctosfo4002_neonflats.esm</span>
<span class="t" style="left:933.30px;top:118px;letter-spacing:-0.082px;color:#808080;">[0A] Unofficial Fallout 4 Patch.esp</span>
<span class="t" style="left:1133.30px;top:118px;letter-spacing:-0.343px;color:#ff0000;">[B0] RRTV_GoodneighborCondo.e...</span>
<span class="t" style="left:1333.30px;top:118px;letter-spacing:-0.278px;color:#ff0000;">[B6] Z_Horizon.esp</span>
<div style="left:1516px;top:136px;width:16px;height:565px;background:#f0f0f0;"></div>
<svg style="left:1520px;top:142px" width="7" height="6" viewBox="0 0 7 6"><polygon points="0,3.5 3.5,0 7,3.5 7,6 3.5,2.5 0,6" fill="#505050"/></svg>
<svg style="left:1520px;top:690px" width="7" height="6" viewBox="0 0 7 6"><polygon points="0,2.5 3.5,6 7,2.5 7,0 3.5,3.5 0,0" fill="#505050"/></svg>
<div style="left:1516px;top:221px;width:15px;height:17px;background:#cdcdcd;"></div>
<div style="left:508px;top:701px;width:1024px;height:1px;background:#fff;"></div>
<div style="left:508px;top:702px;width:1007px;height:16px;background:#f0f0f0;"></div>
<div style="left:1515px;top:701px;width:1px;height:17px;background:#fff;"></div>
<div style="left:1516px;top:702px;width:16px;height:16px;background:#f0f0f0;"></div>
<svg style="left:513px;top:706px" width="6" height="7" viewBox="0 0 6 7"><polygon points="3.5,0 0,3.5 3.5,7 6,7 2.5,3.5 6,0" fill="#505050"/></svg>
<svg style="left:1504px;top:706px" width="6" height="7" viewBox="0 0 6 7"><polygon points="2.5,0 6,3.5 2.5,7 0,7 3.5,3.5 0,0" fill="#505050"/></svg>
<div style="left:613px;top:702px;width:490px;height:15px;background:#cdcdcd;"></div>
<div style="left:503px;top:722px;width:1034px;height:1px;background:#dfdfdf;"></div>
<div style="left:503px;top:723px;width:1034px;height:22px;background:#f0f0f0;"></div>
<div style="left:503px;top:723px;width:51px;height:24px;background:#fff;"></div>
<div style="left:555px;top:724px;width:319px;height:1px;background:#e6e6e6;"></div>
<div style="left:554px;top:724px;width:1px;height:21px;background:#d9d9d9;"></div>
<div style="left:662px;top:724px;width:1px;height:21px;background:#d9d9d9;"></div>
<div style="left:725px;top:724px;width:1px;height:21px;background:#d9d9d9;"></div>
<div style="left:800px;top:724px;width:1px;height:21px;background:#d9d9d9;"></div>
<div style="left:873px;top:724px;width:1px;height:21px;background:#d9d9d9;"></div>
<span class="t" style="left:511.00px;top:729px;letter-spacing:-0.276px;">View</span>
<span class="t" style="left:559.20px;top:727px;letter-spacing:-0.391px;">Referenced By (44)</span>
<span class="t" style="left:669.50px;top:727px;letter-spacing:-0.641px;">Messages</span>
<span class="t" style="left:732.20px;top:727px;letter-spacing:0.197px;">Information</span>
<span class="t" style="left:807.40px;top:727px;letter-spacing:-0.152px;">What&#x27;s New</span>
<div style="left:1px;top:751px;width:1541px;height:1px;background:#d7d7d7;"></div>
<div style="left:1538px;top:753px;width:1px;height:20px;background:#dcdcdc;"></div>
<span class="t" style="left:6.50px;top:757px;letter-spacing:-0.405px;">[cctosfo4002_neonflats_ru.STRINGS]</span>
<span class="t" style="left:198.80px;top:757px;letter-spacing:-0.347px;">Using</span>
<span class="t" style="left:231.50px;top:757px;letter-spacing:-0.029px;">encoding</span>
<span class="t" style="left:284.60px;top:757px;letter-spacing:0.400px;">(from</span>
<span class="t" style="left:318.10px;top:757px;letter-spacing:-0.224px;">language):</span>
<span class="t" style="left:376.40px;top:757px;letter-spacing:-0.944px;">65001</span>
<span class="t" style="left:410.00px;top:757px;letter-spacing:-0.731px;">(UTF-8)</span>
<span class="t" style="left:450.93px;top:757px;letter-spacing:0.408px;">with</span>
<span class="t" style="left:476.80px;top:757px;letter-spacing:-0.003px;">fallback</span>
<span class="t" style="left:521.40px;top:757px;letter-spacing:0.450px;">(from</span>
<span class="t" style="left:555.10px;top:757px;letter-spacing:-0.183px;">languange)</span>
<span class="t" style="left:617.40px;top:757px;letter-spacing:0.178px;">to:</span>
<span class="t" style="left:635.00px;top:757px;letter-spacing:-1.401px;">1252</span>
<span class="t" style="left:664.80px;top:757px;letter-spacing:-1.000px;">(ANSI</span>
<span class="t" style="left:698.50px;top:757px;letter-spacing:-0.600px;">-</span>
<span class="t" style="left:705.50px;top:757px;letter-spacing:-0.100px;">латиница</span>
<span class="t" style="left:760.70px;top:757px;letter-spacing:-1.572px;">1)</span>
</body></html>
